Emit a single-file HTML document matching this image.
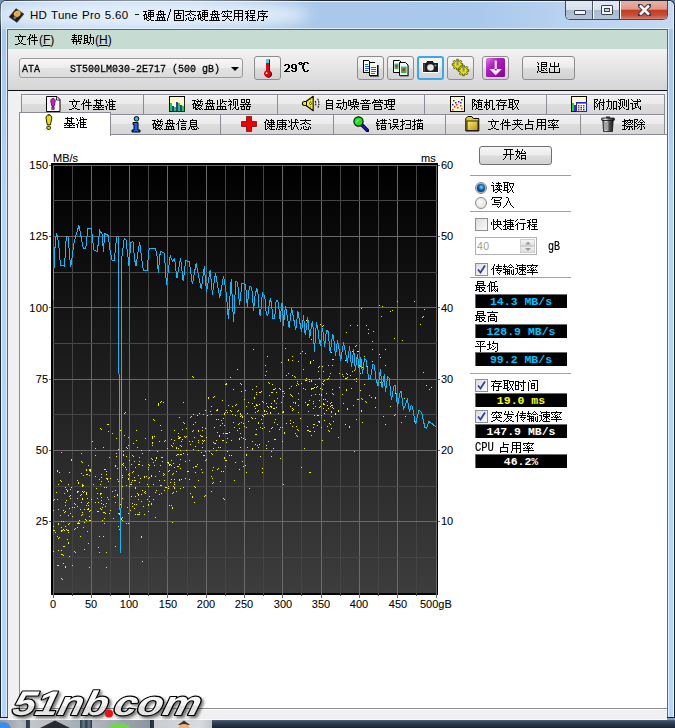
<!DOCTYPE html>
<html><head><meta charset="utf-8">
<style>
*{margin:0;padding:0;box-sizing:border-box}
html,body{width:675px;height:728px;overflow:hidden;background:#6a8aa8}
body{position:relative;font-family:"Liberation Sans",sans-serif;font-size:12px;color:#000}
.a{position:absolute}
#frame{left:0;top:0;width:675px;height:722px;background:linear-gradient(180deg,#b4d0ee 0px,#a9c8ea 14px,#a6c6ea 28px,#b2d4f8 200px,#b4d6fa 720px);border:1px solid #1c2430;border-bottom:none;border-radius:6px 6px 0 0}
#frame:before{content:"";position:absolute;left:0;top:0;right:0;bottom:0;border:1px solid rgba(255,255,255,.75);border-bottom:none;border-radius:5px 5px 0 0}
#title{left:30px;top:9px;font-size:11.5px;white-space:nowrap;color:#000;letter-spacing:0.3px;word-spacing:0.5px}
#client{left:7px;top:29px;width:661px;height:700px;background:#f0f0f0;border:1px solid #59636e;border-bottom:none}
#menubar{left:8px;top:30px;width:659px;height:19px;background:#c6dcd3}
.menu{top:33px;font-size:12px;white-space:nowrap}
#toolbar{left:8px;top:49px;width:659px;height:41px;background:linear-gradient(180deg,#f3f3f3,#d5d5d5)}
#tbline{left:8px;top:90px;width:659px;height:1px;background:#101010}
.btn{border:1px solid #8c8c8c;border-radius:3px;background:linear-gradient(180deg,#f6f6f6 0,#ececec 45%,#dcdcdc 55%,#d2d2d2 100%)}
.tab{border:1px solid #898c95;background:linear-gradient(180deg,#fafafa 0,#efefef 8%,#ebebeb 45%,#dddddd 50%,#d6d6d6 100%);font-size:12px;white-space:nowrap}
#page{left:19px;top:134px;width:649px;height:575px;background:#fff;border:1px solid #898c95}
.lbl{font-size:11px;white-space:nowrap;color:#000;-webkit-text-stroke:0.08px #000}
.sep{left:470px;width:101px;height:1px;background:#a0a0a0}
.box{left:475px;width:92px;height:14px;background:#000;border-top:1px solid #6a6a6a;border-left:1px solid #6a6a6a;font-family:"Liberation Mono",monospace;font-weight:bold;font-size:11.5px;line-height:14px;text-align:center;white-space:pre;text-indent:-1px}
.cb{left:475px;width:13px;height:13px;border:1px solid #8e8f8f;background:linear-gradient(135deg,#dcdcdc,#fbfbfb)}
.txt{font-size:12px;white-space:nowrap}
#taskbar{left:0;top:720px;width:675px;height:8px;background:linear-gradient(180deg,#50647a 0,#34465a 25%,#263444 60%,#1a2430 100%)}
</style></head><body>
<div id="frame" class="a"></div>
<div class="a" style="left:2px;top:2px;width:671px;height:27px;border-radius:4px 4px 0 0;background:linear-gradient(90deg,#bcd4ee 0,#aac8ea 300px,#a8c8ec 470px,#b8d2ef 560px,#c4daf2 675px)"></div>
<div class="a" style="left:-10px;top:-1px;width:320px;height:31px;border-radius:50%;background:rgba(232,242,252,.9);filter:blur(7px)"></div>
<div id="title" class="a">HD Tune Pro 5.60</div>
<div class="a" style="left:135px;top:14px;width:4px;height:1px;background:#1a1a1a"></div>
<!-- caption buttons -->
<div class="a" style="left:565px;top:1px;width:103px;height:19px;border:1px solid #404a58;border-top:none;border-radius:0 0 5px 5px;overflow:hidden;background:#fff">
 <div class="a" style="left:0;top:0;width:27px;height:18px;background:linear-gradient(180deg,#e2eaf4 0,#d6e0ec 50%,#a9bad0 52%,#b4c4d8 100%);border-right:1px solid #4a5462"></div>
 <div class="a" style="left:28px;top:0;width:26px;height:18px;background:linear-gradient(180deg,#e2eaf4 0,#d6e0ec 50%,#a9bad0 52%,#b4c4d8 100%);border-right:1px solid #5a2020"></div>
 <div class="a" style="left:55px;top:0;width:47px;height:18px;background:linear-gradient(180deg,#eab0a4 0,#de9a8a 45%,#c43c22 52%,#c85038 80%,#d88070 100%)"></div>
 <div class="a" style="left:8px;top:9px;width:12px;height:5px;background:#f4f4f4;border:1px solid #3a4250;border-radius:1px"></div>
 <div class="a" style="left:35px;top:4px;width:12px;height:10px;background:#f4f4f4;border:1px solid #3a4250;border-radius:1px"><div class="a" style="left:2px;top:2px;width:6px;height:4px;background:#c4d6e6;border:1px solid #3a4250"></div></div>
 <svg class="a" style="left:72px;top:3px" width="13" height="12" viewBox="0 0 13 12"><path d="M2 1.5L11 10.5M11 1.5L2 10.5" stroke="#3a3a48" stroke-width="4.6" stroke-linecap="square"/><path d="M2 1.5L11 10.5M11 1.5L2 10.5" stroke="#f6f6f6" stroke-width="2.6"/></svg>
</div>
<div class="a" style="left:6px;top:28px;width:663px;height:700px;border:1px solid rgba(235,245,255,.8);border-bottom:none"></div>
<div id="client" class="a"></div>
<div id="menubar" class="a"></div>
<div class="a menu" style="left:39px">(<u>F</u>)</div>
<div class="a menu" style="left:95px">(<u>H</u>)</div>
<div id="toolbar" class="a"></div>
<div id="tbline" class="a"></div>
<!-- combobox -->
<div class="a" style="left:19px;top:58px;width:224px;height:20px;border:1px solid #9a9a9a;border-radius:3px;background:linear-gradient(180deg,#f8f8f8,#ececec 50%,#e2e2e2 51%,#dcdcdc)"></div>
<div class="a" style="left:22px;top:63px;font-family:'Liberation Mono',monospace;font-size:10px;white-space:pre;transform:scaleY(1.15);transform-origin:0 0;-webkit-text-stroke:0.25px #000">ATA     ST500LM030-2E717 (500 gB)</div>
<div class="a" style="left:231px;top:67px;width:0;height:0;border-left:4px solid transparent;border-right:4px solid transparent;border-top:4px solid #000"></div>
<!-- temp button -->
<div class="a btn" style="left:254px;top:56px;width:27px;height:24px"></div>

<!-- toolbar buttons -->
<div class="a btn" style="left:357px;top:56px;width:27px;height:24px"></div>
<div class="a btn" style="left:387px;top:56px;width:27px;height:24px"></div>
<div class="a btn" style="left:417px;top:56px;width:27px;height:24px;border:2px solid #3aa8ec;background:linear-gradient(180deg,#f8f8f8 0,#ededed 45%,#dcdcdc 55%,#d4d4d4 100%)"></div>
<div class="a btn" style="left:447px;top:56px;width:27px;height:24px"></div>
<div class="a btn" style="left:482px;top:56px;width:27px;height:24px"></div>
<div class="a btn" style="left:522px;top:56px;width:53px;height:24px"></div>
<!-- tabs row 1 -->
<div class="a tab" style="left:21px;top:94px;width:123px;height:21px"></div>
<div class="a tab" style="left:143px;top:94px;width:135px;height:21px"></div>
<div class="a tab" style="left:277px;top:94px;width:148px;height:21px"></div>
<div class="a tab" style="left:424px;top:94px;width:123px;height:21px"></div>
<div class="a tab" style="left:546px;top:94px;width:119px;height:21px"></div>
<!-- page -->
<div id="page" class="a"></div>
<div class="a" style="left:8px;top:709px;width:659px;height:1px;background:#fff"></div>
<div class="a" style="left:8px;top:719px;width:659px;height:1px;background:#fafafa"></div>
<div class="a" style="left:667px;top:29px;width:1px;height:689px;background:#5a6878"></div>
<div class="a" style="left:667px;top:717px;width:8px;height:1px;background:#1c2430"></div>
<div class="a" style="left:667px;top:718px;width:8px;height:2px;background:#8a9aae"></div>
<div class="a" style="left:0;top:717px;width:8px;height:1px;background:#141c26"></div>
<div class="a" style="left:0;top:718px;width:8px;height:2px;background:#dfe3e8"></div>
<!-- tabs row 2 -->
<div class="a tab" style="left:110px;top:114px;width:111px;height:21px"></div>
<div class="a tab" style="left:220px;top:114px;width:114px;height:21px"></div>
<div class="a tab" style="left:333px;top:114px;width:113px;height:21px"></div>
<div class="a tab" style="left:445px;top:114px;width:136px;height:21px"></div>
<div class="a tab" style="left:580px;top:114px;width:85px;height:21px"></div>
<div class="a" style="left:19px;top:112px;width:92px;height:24px;background:#fff;border:1px solid #898c95;border-bottom:none"></div>
<!-- tab labels -->
<svg width="675" height="728" style="position:absolute;left:0;top:0" shape-rendering="crispEdges">
<defs><linearGradient id="cg" x1="0" y1="0" x2="0" y2="1"><stop offset="0" stop-color="#000"/><stop offset="1" stop-color="#3d3d3d"/></linearGradient></defs>
<rect x="51" y="163" width="387" height="432" fill="#000"/>
<rect x="53" y="165" width="383" height="428" fill="url(#cg)"/>
<rect x="53" y="165" width="1" height="433" fill="#6a6a6a"/>
<rect x="72" y="165" width="1" height="431" fill="#444444"/>
<rect x="91" y="165" width="1" height="433" fill="#6a6a6a"/>
<rect x="110" y="165" width="1" height="431" fill="#444444"/>
<rect x="129" y="165" width="1" height="433" fill="#6a6a6a"/>
<rect x="148" y="165" width="1" height="431" fill="#444444"/>
<rect x="167" y="165" width="1" height="433" fill="#6a6a6a"/>
<rect x="187" y="165" width="1" height="431" fill="#444444"/>
<rect x="206" y="165" width="1" height="433" fill="#6a6a6a"/>
<rect x="225" y="165" width="1" height="431" fill="#444444"/>
<rect x="244" y="165" width="1" height="433" fill="#6a6a6a"/>
<rect x="263" y="165" width="1" height="431" fill="#444444"/>
<rect x="282" y="165" width="1" height="433" fill="#6a6a6a"/>
<rect x="301" y="165" width="1" height="431" fill="#444444"/>
<rect x="321" y="165" width="1" height="433" fill="#6a6a6a"/>
<rect x="340" y="165" width="1" height="431" fill="#444444"/>
<rect x="359" y="165" width="1" height="433" fill="#6a6a6a"/>
<rect x="378" y="165" width="1" height="431" fill="#444444"/>
<rect x="397" y="165" width="1" height="433" fill="#6a6a6a"/>
<rect x="416" y="165" width="1" height="431" fill="#444444"/>
<rect x="436" y="165" width="1" height="433" fill="#6a6a6a"/>
<rect x="53" y="165" width="384" height="1" fill="#6a6a6a"/>
<rect x="53" y="200" width="384" height="1" fill="#464646"/>
<rect x="53" y="236" width="384" height="1" fill="#6a6a6a"/>
<rect x="53" y="272" width="384" height="1" fill="#464646"/>
<rect x="53" y="307" width="384" height="1" fill="#6a6a6a"/>
<rect x="53" y="343" width="384" height="1" fill="#464646"/>
<rect x="53" y="379" width="384" height="1" fill="#6a6a6a"/>
<rect x="53" y="414" width="384" height="1" fill="#464646"/>
<rect x="53" y="450" width="384" height="1" fill="#6a6a6a"/>
<rect x="53" y="486" width="384" height="1" fill="#464646"/>
<rect x="53" y="521" width="384" height="1" fill="#6a6a6a"/>
<rect x="53" y="557" width="384" height="1" fill="#464646"/>
<rect x="49" y="165" width="2" height="1" fill="#6a6a6a"/><rect x="438" y="165" width="2" height="1" fill="#6a6a6a"/>
<rect x="49" y="236" width="2" height="1" fill="#6a6a6a"/><rect x="438" y="236" width="2" height="1" fill="#6a6a6a"/>
<rect x="49" y="307" width="2" height="1" fill="#6a6a6a"/><rect x="438" y="307" width="2" height="1" fill="#6a6a6a"/>
<rect x="49" y="379" width="2" height="1" fill="#6a6a6a"/><rect x="438" y="379" width="2" height="1" fill="#6a6a6a"/>
<rect x="49" y="450" width="2" height="1" fill="#6a6a6a"/><rect x="438" y="450" width="2" height="1" fill="#6a6a6a"/>
<rect x="49" y="521" width="2" height="1" fill="#6a6a6a"/><rect x="438" y="521" width="2" height="1" fill="#6a6a6a"/>
<path d="M53 500h1v1h-1zM53 510h1v1h-1zM53 526h1v1h-1zM53 530h1v1h-1zM53 551h1v1h-1zM54 499h1v1h-1zM54 530h1v1h-1zM55 532h1v1h-1zM56 492h1v1h-1zM57 470h1v1h-1zM57 471h1v1h-1zM57 499h1v1h-1zM57 536h1v1h-1zM57 565h1v1h-1zM58 484h1v1h-1zM58 509h1v1h-1zM58 523h1v1h-1zM58 524h1v1h-1zM58 538h1v1h-1zM58 550h1v1h-1zM58 565h1v1h-1zM59 472h1v1h-1zM59 537h1v1h-1zM60 480h1v1h-1zM60 515h1v1h-1zM61 452h1v1h-1zM61 481h1v1h-1zM61 521h1v1h-1zM61 527h1v1h-1zM61 530h1v1h-1zM61 531h1v1h-1zM61 550h1v1h-1zM61 554h1v1h-1zM61 578h1v1h-1zM62 530h1v1h-1zM62 554h1v1h-1zM62 579h1v1h-1zM63 510h1v1h-1zM63 521h1v1h-1zM63 529h1v1h-1zM63 546h1v1h-1zM63 555h1v1h-1zM63 563h1v1h-1zM64 493h1v1h-1zM64 512h1v1h-1zM64 530h1v1h-1zM64 546h1v1h-1zM65 487h1v1h-1zM65 502h1v1h-1zM65 505h1v1h-1zM65 511h1v1h-1zM65 526h1v1h-1zM65 566h1v1h-1zM65 567h1v1h-1zM66 489h1v1h-1zM66 500h1v1h-1zM66 529h1v1h-1zM67 490h1v1h-1zM67 491h1v1h-1zM67 530h1v1h-1zM67 539h1v1h-1zM68 484h1v1h-1zM68 515h1v1h-1zM68 524h1v1h-1zM68 530h1v1h-1zM68 532h1v1h-1zM68 542h1v1h-1zM68 543h1v1h-1zM69 472h1v1h-1zM69 496h1v1h-1zM69 508h1v1h-1zM69 523h1v1h-1zM69 556h1v1h-1zM70 489h1v1h-1zM70 495h1v1h-1zM70 498h1v1h-1zM70 513h1v1h-1zM71 459h1v1h-1zM71 460h1v1h-1zM71 487h1v1h-1zM72 507h1v1h-1zM72 516h1v1h-1zM72 565h1v1h-1zM74 503h1v1h-1zM74 507h1v1h-1zM74 529h1v1h-1zM74 551h1v1h-1zM75 504h1v1h-1zM75 528h1v1h-1zM75 552h1v1h-1zM77 480h1v1h-1zM77 491h1v1h-1zM77 492h1v1h-1zM77 498h1v1h-1zM77 506h1v1h-1zM77 523h1v1h-1zM77 527h1v1h-1zM78 482h1v1h-1zM78 483h1v1h-1zM78 491h1v1h-1zM78 522h1v1h-1zM78 523h1v1h-1zM79 520h1v1h-1zM79 523h1v1h-1zM80 495h1v1h-1zM80 509h1v1h-1zM80 536h1v1h-1zM81 453h1v1h-1zM81 461h1v1h-1zM81 473h1v1h-1zM81 494h1v1h-1zM81 502h1v1h-1zM81 515h1v1h-1zM82 462h1v1h-1zM82 484h1v1h-1zM82 485h1v1h-1zM82 486h1v1h-1zM82 491h1v1h-1zM82 498h1v1h-1zM82 499h1v1h-1zM82 512h1v1h-1zM82 514h1v1h-1zM83 475h1v1h-1zM83 485h1v1h-1zM83 492h1v1h-1zM83 527h1v1h-1zM84 491h1v1h-1zM84 509h1v1h-1zM84 522h1v1h-1zM84 549h1v1h-1zM85 519h1v1h-1zM86 469h1v1h-1zM86 470h1v1h-1zM86 474h1v1h-1zM86 492h1v1h-1zM86 493h1v1h-1zM86 494h1v1h-1zM86 505h1v1h-1zM86 520h1v1h-1zM87 474h1v1h-1zM87 498h1v1h-1zM87 503h1v1h-1zM87 509h1v1h-1zM87 531h1v1h-1zM88 465h1v1h-1zM88 502h1v1h-1zM88 505h1v1h-1zM88 508h1v1h-1zM88 509h1v1h-1zM88 543h1v1h-1zM89 469h1v1h-1zM89 470h1v1h-1zM89 475h1v1h-1zM89 511h1v1h-1zM89 516h1v1h-1zM89 520h1v1h-1zM89 567h1v1h-1zM90 469h1v1h-1zM90 470h1v1h-1zM90 471h1v1h-1zM90 510h1v1h-1zM90 520h1v1h-1zM91 499h1v1h-1zM92 441h1v1h-1zM93 484h1v1h-1zM95 448h1v1h-1zM95 455h1v1h-1zM95 476h1v1h-1zM95 502h1v1h-1zM96 488h1v1h-1zM97 493h1v1h-1zM97 498h1v1h-1zM97 511h1v1h-1zM98 502h1v1h-1zM98 511h1v1h-1zM98 547h1v1h-1zM99 479h1v1h-1zM99 536h1v1h-1zM99 552h1v1h-1zM100 428h1v1h-1zM100 484h1v1h-1zM100 493h1v1h-1zM100 494h1v1h-1zM100 508h1v1h-1zM101 429h1v1h-1zM101 474h1v1h-1zM101 477h1v1h-1zM101 481h1v1h-1zM101 493h1v1h-1zM101 497h1v1h-1zM101 500h1v1h-1zM101 503h1v1h-1zM101 509h1v1h-1zM102 507h1v1h-1zM102 520h1v1h-1zM103 447h1v1h-1zM103 504h1v1h-1zM103 512h1v1h-1zM103 536h1v1h-1zM104 469h1v1h-1zM104 487h1v1h-1zM104 512h1v1h-1zM104 518h1v1h-1zM104 523h1v1h-1zM105 469h1v1h-1zM105 506h1v1h-1zM105 513h1v1h-1zM106 471h1v1h-1zM106 474h1v1h-1zM106 478h1v1h-1zM106 487h1v1h-1zM106 503h1v1h-1zM106 552h1v1h-1zM106 567h1v1h-1zM107 424h1v1h-1zM107 478h1v1h-1zM107 479h1v1h-1zM107 497h1v1h-1zM108 424h1v1h-1zM108 431h1v1h-1zM108 481h1v1h-1zM108 499h1v1h-1zM109 457h1v1h-1zM109 513h1v1h-1zM110 478h1v1h-1zM110 510h1v1h-1zM112 433h1v1h-1zM112 491h1v1h-1zM113 518h1v1h-1zM114 496h1v1h-1zM115 465h1v1h-1zM115 466h1v1h-1zM115 490h1v1h-1zM115 502h1v1h-1zM115 546h1v1h-1zM116 438h1v1h-1zM116 453h1v1h-1zM116 456h1v1h-1zM117 468h1v1h-1zM117 479h1v1h-1zM117 494h1v1h-1zM117 495h1v1h-1zM118 449h1v1h-1zM118 481h1v1h-1zM118 513h1v1h-1zM118 526h1v1h-1zM119 499h1v1h-1zM119 502h1v1h-1zM119 513h1v1h-1zM119 514h1v1h-1zM119 529h1v1h-1zM120 430h1v1h-1zM120 504h1v1h-1zM121 430h1v1h-1zM121 466h1v1h-1zM121 480h1v1h-1zM121 484h1v1h-1zM121 488h1v1h-1zM121 503h1v1h-1zM121 518h1v1h-1zM121 519h1v1h-1zM122 464h1v1h-1zM122 475h1v1h-1zM122 477h1v1h-1zM122 486h1v1h-1zM122 498h1v1h-1zM122 517h1v1h-1zM122 520h1v1h-1zM123 451h1v1h-1zM123 454h1v1h-1zM123 455h1v1h-1zM123 463h1v1h-1zM123 465h1v1h-1zM124 413h1v1h-1zM124 435h1v1h-1zM125 412h1v1h-1zM125 467h1v1h-1zM126 447h1v1h-1zM126 456h1v1h-1zM126 469h1v1h-1zM126 485h1v1h-1zM126 523h1v1h-1zM127 448h1v1h-1zM127 507h1v1h-1zM128 437h1v1h-1zM128 445h1v1h-1zM128 474h1v1h-1zM128 478h1v1h-1zM128 479h1v1h-1zM128 513h1v1h-1zM128 523h1v1h-1zM129 460h1v1h-1zM129 473h1v1h-1zM129 475h1v1h-1zM129 486h1v1h-1zM130 484h1v1h-1zM130 510h1v1h-1zM131 464h1v1h-1zM131 482h1v1h-1zM131 484h1v1h-1zM131 496h1v1h-1zM132 455h1v1h-1zM132 472h1v1h-1zM132 480h1v1h-1zM132 503h1v1h-1zM132 506h1v1h-1zM133 443h1v1h-1zM133 456h1v1h-1zM133 471h1v1h-1zM134 461h1v1h-1zM134 477h1v1h-1zM134 480h1v1h-1zM134 504h1v1h-1zM134 508h1v1h-1zM135 467h1v1h-1zM135 480h1v1h-1zM135 487h1v1h-1zM135 488h1v1h-1zM135 496h1v1h-1zM135 514h1v1h-1zM136 430h1v1h-1zM136 440h1v1h-1zM136 504h1v1h-1zM137 447h1v1h-1zM137 493h1v1h-1zM137 514h1v1h-1zM138 464h1v1h-1zM138 475h1v1h-1zM138 494h1v1h-1zM138 495h1v1h-1zM138 499h1v1h-1zM138 514h1v1h-1zM139 457h1v1h-1zM139 461h1v1h-1zM139 464h1v1h-1zM139 482h1v1h-1zM139 512h1v1h-1zM139 514h1v1h-1zM140 478h1v1h-1zM141 450h1v1h-1zM141 494h1v1h-1zM141 501h1v1h-1zM141 536h1v1h-1zM141 537h1v1h-1zM142 453h1v1h-1zM142 465h1v1h-1zM142 490h1v1h-1zM142 561h1v1h-1zM143 506h1v1h-1zM144 476h1v1h-1zM144 477h1v1h-1zM144 492h1v1h-1zM144 514h1v1h-1zM145 399h1v1h-1zM145 438h1v1h-1zM145 491h1v1h-1zM145 493h1v1h-1zM146 476h1v1h-1zM147 484h1v1h-1zM147 499h1v1h-1zM148 464h1v1h-1zM148 467h1v1h-1zM148 469h1v1h-1zM148 478h1v1h-1zM148 486h1v1h-1zM148 504h1v1h-1zM148 505h1v1h-1zM148 511h1v1h-1zM149 450h1v1h-1zM149 465h1v1h-1zM149 477h1v1h-1zM149 496h1v1h-1zM149 501h1v1h-1zM151 458h1v1h-1zM151 475h1v1h-1zM151 476h1v1h-1zM151 503h1v1h-1zM151 504h1v1h-1zM152 436h1v1h-1zM152 437h1v1h-1zM152 438h1v1h-1zM152 442h1v1h-1zM152 443h1v1h-1zM152 445h1v1h-1zM152 459h1v1h-1zM153 419h1v1h-1zM153 462h1v1h-1zM153 484h1v1h-1zM153 499h1v1h-1zM154 420h1v1h-1zM154 436h1v1h-1zM154 465h1v1h-1zM155 460h1v1h-1zM155 476h1v1h-1zM155 492h1v1h-1zM155 517h1v1h-1zM156 457h1v1h-1zM156 458h1v1h-1zM156 490h1v1h-1zM157 451h1v1h-1zM158 403h1v1h-1zM158 404h1v1h-1zM158 405h1v1h-1zM159 441h1v1h-1zM159 471h1v1h-1zM159 480h1v1h-1zM159 494h1v1h-1zM160 402h1v1h-1zM160 425h1v1h-1zM160 465h1v1h-1zM160 485h1v1h-1zM161 401h1v1h-1zM161 430h1v1h-1zM161 457h1v1h-1zM161 485h1v1h-1zM161 493h1v1h-1zM162 457h1v1h-1zM162 461h1v1h-1zM163 402h1v1h-1zM163 473h1v1h-1zM163 475h1v1h-1zM164 441h1v1h-1zM164 474h1v1h-1zM164 480h1v1h-1zM164 490h1v1h-1zM165 440h1v1h-1zM165 487h1v1h-1zM166 487h1v1h-1zM167 448h1v1h-1zM167 462h1v1h-1zM168 462h1v1h-1zM168 463h1v1h-1zM168 471h1v1h-1zM168 486h1v1h-1zM168 488h1v1h-1zM169 464h1v1h-1zM169 465h1v1h-1zM169 470h1v1h-1zM169 505h1v1h-1zM170 464h1v1h-1zM170 482h1v1h-1zM171 439h1v1h-1zM171 445h1v1h-1zM171 460h1v1h-1zM171 465h1v1h-1zM171 479h1v1h-1zM171 505h1v1h-1zM172 446h1v1h-1zM172 474h1v1h-1zM172 493h1v1h-1zM172 507h1v1h-1zM172 508h1v1h-1zM172 522h1v1h-1zM173 443h1v1h-1zM173 463h1v1h-1zM173 473h1v1h-1zM173 486h1v1h-1zM173 492h1v1h-1zM174 430h1v1h-1zM174 440h1v1h-1zM174 467h1v1h-1zM174 479h1v1h-1zM174 482h1v1h-1zM174 484h1v1h-1zM174 487h1v1h-1zM174 488h1v1h-1zM176 447h1v1h-1zM176 448h1v1h-1zM176 455h1v1h-1zM176 471h1v1h-1zM176 491h1v1h-1zM177 454h1v1h-1zM177 466h1v1h-1zM178 433h1v1h-1zM178 436h1v1h-1zM178 438h1v1h-1zM178 448h1v1h-1zM178 454h1v1h-1zM178 466h1v1h-1zM179 417h1v1h-1zM179 437h1v1h-1zM179 438h1v1h-1zM179 464h1v1h-1zM179 479h1v1h-1zM179 480h1v1h-1zM180 437h1v1h-1zM180 445h1v1h-1zM180 450h1v1h-1zM180 454h1v1h-1zM180 459h1v1h-1zM180 468h1v1h-1zM180 488h1v1h-1zM181 441h1v1h-1zM181 446h1v1h-1zM181 454h1v1h-1zM181 479h1v1h-1zM182 429h1v1h-1zM182 439h1v1h-1zM183 402h1v1h-1zM183 422h1v1h-1zM183 453h1v1h-1zM183 487h1v1h-1zM184 423h1v1h-1zM184 436h1v1h-1zM185 437h1v1h-1zM185 461h1v1h-1zM185 478h1v1h-1zM186 428h1v1h-1zM186 436h1v1h-1zM186 450h1v1h-1zM187 454h1v1h-1zM187 471h1v1h-1zM188 471h1v1h-1zM189 441h1v1h-1zM189 460h1v1h-1zM189 479h1v1h-1zM190 417h1v1h-1zM190 444h1v1h-1zM190 493h1v1h-1zM191 416h1v1h-1zM192 376h1v1h-1zM192 431h1v1h-1zM192 441h1v1h-1zM192 496h1v1h-1zM192 497h1v1h-1zM193 377h1v1h-1zM193 414h1v1h-1zM193 424h1v1h-1zM193 430h1v1h-1zM193 449h1v1h-1zM193 467h1v1h-1zM194 437h1v1h-1zM194 486h1v1h-1zM194 502h1v1h-1zM195 422h1v1h-1zM195 446h1v1h-1zM195 466h1v1h-1zM195 472h1v1h-1zM195 487h1v1h-1zM196 466h1v1h-1zM197 415h1v1h-1zM197 464h1v1h-1zM198 430h1v1h-1zM198 431h1v1h-1zM198 440h1v1h-1zM198 442h1v1h-1zM198 450h1v1h-1zM198 480h1v1h-1zM199 413h1v1h-1zM200 435h1v1h-1zM201 436h1v1h-1zM201 452h1v1h-1zM201 469h1v1h-1zM202 427h1v1h-1zM202 430h1v1h-1zM202 436h1v1h-1zM202 440h1v1h-1zM202 443h1v1h-1zM202 447h1v1h-1zM202 472h1v1h-1zM203 414h1v1h-1zM203 441h1v1h-1zM203 455h1v1h-1zM204 440h1v1h-1zM204 455h1v1h-1zM204 496h1v1h-1zM205 410h1v1h-1zM205 428h1v1h-1zM205 451h1v1h-1zM205 460h1v1h-1zM205 495h1v1h-1zM206 437h1v1h-1zM206 459h1v1h-1zM207 415h1v1h-1zM208 397h1v1h-1zM208 398h1v1h-1zM209 451h1v1h-1zM210 411h1v1h-1zM211 406h1v1h-1zM211 414h1v1h-1zM211 453h1v1h-1zM211 476h1v1h-1zM211 491h1v1h-1zM212 454h1v1h-1zM212 470h1v1h-1zM212 478h1v1h-1zM212 483h1v1h-1zM213 397h1v1h-1zM213 442h1v1h-1zM213 448h1v1h-1zM213 467h1v1h-1zM213 482h1v1h-1zM214 396h1v1h-1zM214 427h1v1h-1zM214 443h1v1h-1zM215 443h1v1h-1zM216 410h1v1h-1zM216 419h1v1h-1zM216 440h1v1h-1zM216 450h1v1h-1zM217 409h1v1h-1zM217 410h1v1h-1zM217 432h1v1h-1zM217 469h1v1h-1zM218 419h1v1h-1zM218 447h1v1h-1zM218 468h1v1h-1zM219 435h1v1h-1zM219 436h1v1h-1zM220 425h1v1h-1zM220 447h1v1h-1zM220 481h1v1h-1zM221 420h1v1h-1zM221 471h1v1h-1zM222 400h1v1h-1zM222 423h1v1h-1zM222 440h1v1h-1zM223 418h1v1h-1zM223 433h1v1h-1zM223 440h1v1h-1zM223 471h1v1h-1zM223 498h1v1h-1zM224 413h1v1h-1zM224 414h1v1h-1zM224 425h1v1h-1zM224 457h1v1h-1zM224 458h1v1h-1zM224 499h1v1h-1zM225 384h1v1h-1zM225 412h1v1h-1zM225 433h1v1h-1zM225 460h1v1h-1zM225 466h1v1h-1zM226 383h1v1h-1zM226 384h1v1h-1zM226 410h1v1h-1zM226 433h1v1h-1zM226 442h1v1h-1zM226 460h1v1h-1zM227 412h1v1h-1zM227 433h1v1h-1zM227 438h1v1h-1zM227 451h1v1h-1zM228 405h1v1h-1zM229 432h1v1h-1zM229 455h1v1h-1zM230 377h1v1h-1zM230 410h1v1h-1zM231 411h1v1h-1zM231 440h1v1h-1zM231 455h1v1h-1zM232 406h1v1h-1zM232 414h1v1h-1zM233 389h1v1h-1zM233 422h1v1h-1zM234 427h1v1h-1zM234 480h1v1h-1zM235 405h1v1h-1zM235 415h1v1h-1zM235 462h1v1h-1zM236 404h1v1h-1zM237 369h1v1h-1zM237 411h1v1h-1zM237 430h1v1h-1zM238 410h1v1h-1zM238 424h1v1h-1zM239 423h1v1h-1zM239 428h1v1h-1zM239 438h1v1h-1zM239 439h1v1h-1zM239 469h1v1h-1zM240 383h1v1h-1zM240 413h1v1h-1zM240 414h1v1h-1zM240 416h1v1h-1zM240 433h1v1h-1zM240 447h1v1h-1zM241 384h1v1h-1zM241 391h1v1h-1zM241 415h1v1h-1zM241 422h1v1h-1zM241 437h1v1h-1zM242 416h1v1h-1zM242 417h1v1h-1zM242 461h1v1h-1zM243 423h1v1h-1zM243 438h1v1h-1zM243 466h1v1h-1zM244 399h1v1h-1zM244 426h1v1h-1zM245 390h1v1h-1zM245 439h1v1h-1zM245 465h1v1h-1zM246 406h1v1h-1zM246 427h1v1h-1zM246 454h1v1h-1zM246 455h1v1h-1zM246 472h1v1h-1zM247 413h1v1h-1zM247 447h1v1h-1zM248 402h1v1h-1zM248 421h1v1h-1zM249 488h1v1h-1zM251 417h1v1h-1zM252 389h1v1h-1zM252 403h1v1h-1zM252 418h1v1h-1zM252 441h1v1h-1zM252 448h1v1h-1zM252 449h1v1h-1zM253 349h1v1h-1zM254 397h1v1h-1zM254 398h1v1h-1zM254 406h1v1h-1zM255 408h1v1h-1zM255 412h1v1h-1zM255 418h1v1h-1zM255 434h1v1h-1zM255 444h1v1h-1zM256 386h1v1h-1zM256 392h1v1h-1zM256 394h1v1h-1zM256 404h1v1h-1zM256 405h1v1h-1zM256 429h1v1h-1zM256 434h1v1h-1zM257 405h1v1h-1zM257 411h1v1h-1zM257 445h1v1h-1zM258 410h1v1h-1zM258 422h1v1h-1zM258 423h1v1h-1zM258 447h1v1h-1zM259 392h1v1h-1zM259 404h1v1h-1zM259 444h1v1h-1zM260 392h1v1h-1zM260 427h1v1h-1zM260 456h1v1h-1zM261 391h1v1h-1zM261 419h1v1h-1zM262 401h1v1h-1zM262 415h1v1h-1zM262 423h1v1h-1zM262 428h1v1h-1zM262 468h1v1h-1zM262 472h1v1h-1zM263 402h1v1h-1zM263 416h1v1h-1zM264 410h1v1h-1zM264 411h1v1h-1zM264 414h1v1h-1zM264 427h1v1h-1zM265 365h1v1h-1zM265 375h1v1h-1zM265 414h1v1h-1zM266 371h1v1h-1zM266 403h1v1h-1zM266 411h1v1h-1zM266 445h1v1h-1zM266 448h1v1h-1zM267 356h1v1h-1zM267 406h1v1h-1zM267 413h1v1h-1zM268 382h1v1h-1zM268 407h1v1h-1zM268 441h1v1h-1zM269 383h1v1h-1zM269 395h1v1h-1zM269 431h1v1h-1zM270 406h1v1h-1zM270 412h1v1h-1zM270 413h1v1h-1zM271 392h1v1h-1zM271 403h1v1h-1zM271 406h1v1h-1zM271 407h1v1h-1zM271 428h1v1h-1zM271 451h1v1h-1zM271 456h1v1h-1zM272 384h1v1h-1zM272 392h1v1h-1zM272 427h1v1h-1zM273 389h1v1h-1zM273 408h1v1h-1zM273 448h1v1h-1zM274 389h1v1h-1zM274 400h1v1h-1zM274 401h1v1h-1zM274 408h1v1h-1zM274 422h1v1h-1zM274 439h1v1h-1zM275 388h1v1h-1zM275 419h1v1h-1zM275 439h1v1h-1zM276 392h1v1h-1zM276 403h1v1h-1zM276 407h1v1h-1zM277 398h1v1h-1zM277 424h1v1h-1zM278 413h1v1h-1zM279 388h1v1h-1zM279 429h1v1h-1zM280 389h1v1h-1zM280 427h1v1h-1zM280 458h1v1h-1zM281 362h1v1h-1zM281 402h1v1h-1zM282 391h1v1h-1zM282 412h1v1h-1zM282 427h1v1h-1zM282 441h1v1h-1zM283 391h1v1h-1zM283 396h1v1h-1zM283 411h1v1h-1zM283 412h1v1h-1zM283 484h1v1h-1zM284 393h1v1h-1zM284 432h1v1h-1zM284 433h1v1h-1zM285 348h1v1h-1zM286 375h1v1h-1zM286 423h1v1h-1zM288 359h1v1h-1zM288 360h1v1h-1zM288 373h1v1h-1zM289 388h1v1h-1zM290 394h1v1h-1zM290 406h1v1h-1zM290 420h1v1h-1zM290 423h1v1h-1zM291 386h1v1h-1zM291 395h1v1h-1zM292 356h1v1h-1zM292 360h1v1h-1zM292 375h1v1h-1zM292 396h1v1h-1zM292 408h1v1h-1zM292 410h1v1h-1zM292 426h1v1h-1zM293 402h1v1h-1zM293 409h1v1h-1zM293 422h1v1h-1zM294 376h1v1h-1zM295 377h1v1h-1zM295 402h1v1h-1zM295 403h1v1h-1zM295 433h1v1h-1zM296 385h1v1h-1zM296 426h1v1h-1zM296 435h1v1h-1zM297 381h1v1h-1zM297 383h1v1h-1zM297 429h1v1h-1zM297 436h1v1h-1zM298 361h1v1h-1zM298 384h1v1h-1zM298 393h1v1h-1zM298 399h1v1h-1zM298 405h1v1h-1zM298 412h1v1h-1zM298 430h1v1h-1zM300 353h1v1h-1zM300 418h1v1h-1zM301 383h1v1h-1zM301 467h1v1h-1zM302 351h1v1h-1zM303 369h1v1h-1zM303 388h1v1h-1zM304 448h1v1h-1zM305 353h1v1h-1zM305 380h1v1h-1zM305 389h1v1h-1zM305 402h1v1h-1zM306 320h1v1h-1zM306 378h1v1h-1zM306 380h1v1h-1zM307 318h1v1h-1zM307 404h1v1h-1zM307 405h1v1h-1zM307 426h1v1h-1zM307 430h1v1h-1zM308 404h1v1h-1zM308 411h1v1h-1zM308 430h1v1h-1zM309 379h1v1h-1zM309 381h1v1h-1zM309 400h1v1h-1zM309 431h1v1h-1zM309 472h1v1h-1zM310 361h1v1h-1zM310 362h1v1h-1zM310 363h1v1h-1zM310 431h1v1h-1zM310 472h1v1h-1zM311 339h1v1h-1zM311 380h1v1h-1zM311 381h1v1h-1zM311 388h1v1h-1zM311 389h1v1h-1zM311 395h1v1h-1zM311 435h1v1h-1zM312 388h1v1h-1zM313 360h1v1h-1zM313 388h1v1h-1zM313 401h1v1h-1zM313 403h1v1h-1zM313 408h1v1h-1zM313 424h1v1h-1zM313 427h1v1h-1zM314 387h1v1h-1zM314 415h1v1h-1zM314 424h1v1h-1zM314 431h1v1h-1zM315 384h1v1h-1zM315 394h1v1h-1zM315 406h1v1h-1zM316 387h1v1h-1zM317 386h1v1h-1zM317 415h1v1h-1zM317 425h1v1h-1zM318 367h1v1h-1zM318 371h1v1h-1zM318 415h1v1h-1zM318 421h1v1h-1zM319 366h1v1h-1zM319 378h1v1h-1zM319 394h1v1h-1zM319 400h1v1h-1zM319 407h1v1h-1zM319 421h1v1h-1zM319 422h1v1h-1zM320 324h1v1h-1zM320 388h1v1h-1zM320 406h1v1h-1zM321 394h1v1h-1zM321 395h1v1h-1zM321 415h1v1h-1zM321 427h1v1h-1zM322 326h1v1h-1zM322 366h1v1h-1zM322 383h1v1h-1zM322 389h1v1h-1zM322 440h1v1h-1zM323 325h1v1h-1zM323 371h1v1h-1zM323 381h1v1h-1zM323 384h1v1h-1zM323 399h1v1h-1zM323 403h1v1h-1zM323 404h1v1h-1zM323 408h1v1h-1zM324 380h1v1h-1zM324 404h1v1h-1zM324 413h1v1h-1zM324 420h1v1h-1zM325 399h1v1h-1zM326 393h1v1h-1zM326 410h1v1h-1zM327 379h1v1h-1zM327 401h1v1h-1zM327 405h1v1h-1zM327 426h1v1h-1zM328 365h1v1h-1zM328 378h1v1h-1zM328 408h1v1h-1zM328 430h1v1h-1zM329 376h1v1h-1zM329 423h1v1h-1zM329 431h1v1h-1zM330 373h1v1h-1zM330 403h1v1h-1zM330 406h1v1h-1zM330 424h1v1h-1zM331 352h1v1h-1zM331 402h1v1h-1zM331 405h1v1h-1zM331 411h1v1h-1zM331 412h1v1h-1zM331 416h1v1h-1zM331 428h1v1h-1zM332 359h1v1h-1zM332 365h1v1h-1zM332 389h1v1h-1zM332 393h1v1h-1zM332 405h1v1h-1zM332 407h1v1h-1zM333 359h1v1h-1zM333 394h1v1h-1zM333 408h1v1h-1zM333 421h1v1h-1zM335 413h1v1h-1zM335 414h1v1h-1zM338 410h1v1h-1zM338 411h1v1h-1zM338 437h1v1h-1zM339 373h1v1h-1zM339 387h1v1h-1zM342 374h1v1h-1zM342 394h1v1h-1zM343 376h1v1h-1zM343 403h1v1h-1zM345 360h1v1h-1zM345 378h1v1h-1zM345 424h1v1h-1zM346 332h1v1h-1zM346 373h1v1h-1zM346 378h1v1h-1zM346 389h1v1h-1zM346 390h1v1h-1zM347 374h1v1h-1zM347 377h1v1h-1zM347 408h1v1h-1zM347 409h1v1h-1zM349 426h1v1h-1zM349 427h1v1h-1zM350 325h1v1h-1zM350 375h1v1h-1zM351 388h1v1h-1zM352 351h1v1h-1zM352 371h1v1h-1zM353 351h1v1h-1zM353 405h1v1h-1zM354 370h1v1h-1zM354 379h1v1h-1zM354 451h1v1h-1zM355 346h1v1h-1zM356 345h1v1h-1zM356 362h1v1h-1zM356 378h1v1h-1zM356 381h1v1h-1zM356 419h1v1h-1zM357 325h1v1h-1zM357 351h1v1h-1zM357 355h1v1h-1zM357 399h1v1h-1zM358 351h1v1h-1zM358 399h1v1h-1zM359 365h1v1h-1zM360 366h1v1h-1zM360 373h1v1h-1zM360 390h1v1h-1zM361 308h1v1h-1zM361 398h1v1h-1zM361 410h1v1h-1zM361 411h1v1h-1zM362 367h1v1h-1zM362 399h1v1h-1zM362 422h1v1h-1zM364 356h1v1h-1zM364 384h1v1h-1zM365 401h1v1h-1zM366 325h1v1h-1zM366 402h1v1h-1zM367 366h1v1h-1zM368 329h1v1h-1zM368 333h1v1h-1zM369 395h1v1h-1zM371 397h1v1h-1zM372 341h1v1h-1zM372 349h1v1h-1zM372 361h1v1h-1zM373 331h1v1h-1zM375 397h1v1h-1zM375 398h1v1h-1zM375 407h1v1h-1zM379 305h1v1h-1zM379 354h1v1h-1zM380 357h1v1h-1zM380 382h1v1h-1zM381 316h1v1h-1zM381 383h1v1h-1zM382 306h1v1h-1zM383 416h1v1h-1zM384 375h1v1h-1zM385 349h1v1h-1zM385 365h1v1h-1zM385 424h1v1h-1zM390 311h1v1h-1zM390 406h1v1h-1zM392 310h1v1h-1zM394 338h1v1h-1zM394 415h1v1h-1zM395 393h1v1h-1zM395 414h1v1h-1zM397 301h1v1h-1zM401 422h1v1h-1zM402 340h1v1h-1zM404 398h1v1h-1zM405 416h1v1h-1zM414 301h1v1h-1zM414 421h1v1h-1zM420 324h1v1h-1zM422 317h1v1h-1zM423 316h1v1h-1zM423 372h1v1h-1zM424 309h1v1h-1zM426 385h1v1h-1zM429 389h1v1h-1zM431 387h1v1h-1z" fill="#f4f400"/>
<polyline points="53.2,299.7 53.8,281.8 54.2,257.0 55.6,240.6 56.5,233.0 57.6,236.5 59.0,247.5 60.4,265.3 64.5,266.0 66.3,236.5 68.0,236.5 70.7,267.4 74.1,242.0 78.9,225.5 83.3,248.5 85.8,248.2 87.8,228.5 91.5,229.0 93.7,250.0 97.4,251.5 99.6,230.0 102.5,235.0 103.3,252.0 104.8,233.7 108.3,235.4 110.0,250.3 112.1,260.2 114.3,260.2 116.0,242.6 117.1,236.0 118.2,237.1 119.6,474.0 120.5,552.5 121.4,474.0 122.0,256.3 124.2,238.7 125.9,239.3 128.1,258.0 129.0,265.7 130.8,242.6 133.0,241.5 134.7,260.2 136.0,266.0 139.6,241.9 143.3,270.7 147.0,270.7 149.1,248.7 155.4,248.7 156.9,254.6 158.3,273.0 160.3,251.4 164.3,253.1 166.5,285.0 170.2,255.4 172.4,261.3 174.6,258.3 176.9,278.3 180.6,258.3 183.2,281.3 185.7,260.6 189.4,262.0 192.4,284.3 196.1,263.5 201.3,289.4 204.3,266.5 206.5,291.7 210.2,270.2 212.4,294.6 215.4,273.1 219.8,297.6 223.5,276.1 226.5,294.6 228.3,319.3 231.2,279.3 233.6,322.2 235.7,281.5 237.6,282.2 239.5,305.2 242.0,283.4 245.5,284.3 246.0,289.5 247.3,307.2 248.6,291.6 250.0,285.9 251.4,287.4 252.5,294.2 253.5,311.3 254.9,296.3 256.6,289.0 257.7,289.5 258.5,302.0 259.5,314.4 260.6,315.0 261.6,299.9 262.6,293.2 264.7,295.7 266.3,314.4 267.8,316.0 269.4,303.0 270.4,298.3 271.5,304.0 273.0,319.1 274.6,318.6 276.1,300.9 277.7,300.4 279.2,310.3 280.3,322.2 281.5,303.0 282.6,303.0 283.4,326.3 285.5,305.6 289.1,327.9 291.7,308.2 295.8,330.0 297.9,311.3 301.5,332.1 303.6,315.5 305.2,335.2 307.8,317.5 309.8,337.8 311.3,326.5 312.4,321.0 313.3,329.2 314.4,352.3 315.3,338.6 316.4,322.1 317.7,327.6 318.8,337.5 320.4,346.3 322.3,328.1 323.7,336.4 324.5,347.4 326.5,330.3 328.1,331.4 330.3,353.4 332.5,334.7 333.6,336.4 335.5,356.2 337.5,339.7 340.8,360.5 343.5,342.4 347.4,362.7 349.6,346.3 351.5,367.1 353.7,349.0 355.3,369.9 357.5,354.0 359.5,372.1 360.8,356.7 362.5,373.7 364.4,358.4 366.0,359.5 368.8,379.2 370.4,378.7 372.7,364.4 374.2,365.0 376.0,379.2 378.2,386.4 380.4,369.3 382.1,388.0 384.3,374.3 385.4,392.4 387.6,377.0 389.2,378.1 391.4,399.6 394.2,385.3 395.3,385.8 397.5,406.7 400.2,391.9 401.3,391.9 403.5,409.5 407.4,399.6 409.6,412.2 411.2,405.0 412.3,406.2 415.6,424.3 418.9,410.5 421.6,412.2 424.9,427.6 426.6,428.1 428.8,421.5 431.5,423.2 435.9,427.0" fill="none" stroke="#14b8f4" stroke-width="1" shape-rendering="crispEdges"/>
</svg>
<!-- axis labels -->
<div class="a lbl" style="left:53px;top:152px">MB/s</div>
<div class="a lbl" style="left:421px;top:152px">ms</div>
<div class="a lbl" style="left:0;width:48.5px;text-align:right;top:159px;letter-spacing:0.3px">150</div>
<div class="a lbl" style="left:0;width:48.5px;text-align:right;top:230px;letter-spacing:0.3px">125</div>
<div class="a lbl" style="left:0;width:48.5px;text-align:right;top:302px;letter-spacing:0.3px">100</div>
<div class="a lbl" style="left:0;width:48.5px;text-align:right;top:373px;letter-spacing:0.3px">75</div>
<div class="a lbl" style="left:0;width:48.5px;text-align:right;top:444px;letter-spacing:0.3px">50</div>
<div class="a lbl" style="left:0;width:48.5px;text-align:right;top:515px;letter-spacing:0.3px">25</div>
<div class="a lbl" style="left:441px;top:159px">60</div>
<div class="a lbl" style="left:441px;top:230px">50</div>
<div class="a lbl" style="left:441px;top:302px">40</div>
<div class="a lbl" style="left:441px;top:373px">30</div>
<div class="a lbl" style="left:441px;top:444px">20</div>
<div class="a lbl" style="left:441px;top:515px">10</div>
<div class="a lbl" style="left:23px;width:60px;text-align:center;top:598px">0</div>
<div class="a lbl" style="left:61px;width:60px;text-align:center;top:598px">50</div>
<div class="a lbl" style="left:99px;width:60px;text-align:center;top:598px">100</div>
<div class="a lbl" style="left:138px;width:60px;text-align:center;top:598px">150</div>
<div class="a lbl" style="left:176px;width:60px;text-align:center;top:598px">200</div>
<div class="a lbl" style="left:214px;width:60px;text-align:center;top:598px">250</div>
<div class="a lbl" style="left:253px;width:60px;text-align:center;top:598px">300</div>
<div class="a lbl" style="left:291px;width:60px;text-align:center;top:598px">350</div>
<div class="a lbl" style="left:329px;width:60px;text-align:center;top:598px">400</div>
<div class="a lbl" style="left:368px;width:60px;text-align:center;top:598px">450</div>
<div class="a lbl" style="left:420px;top:598px">500gB</div>
<!-- right panel -->
<div class="a btn" style="left:479px;top:146px;width:73px;height:19px;border-color:#707070"></div>
<div class="a sep" style="top:175px"></div>
<div class="a" style="left:475px;top:182px;width:12px;height:12px;border-radius:50%;border:1px solid #8a8a8a;background:radial-gradient(circle at 50% 50%,#f4f4f4 0,#e4e4e4 100%)"></div>
<div class="a" style="left:477px;top:184px;width:8px;height:8px;border-radius:50%;background:radial-gradient(circle at 55% 40%,#9ee4ff 0,#2a9ae8 1.5px,#0e5aa8 3px,#0a3a78 4px);box-shadow:0 0 0 0.5px #3a5a80"></div>
<div class="a" style="left:475px;top:197px;width:12px;height:12px;border-radius:50%;border:1px solid #8a8a8a;background:radial-gradient(circle at 40% 40%,#fafafa,#d8d8d8)"></div>
<div class="a sep" style="top:211px"></div>
<div class="a cb" style="top:218px"></div>
<div class="a" style="left:475px;top:237px;width:62px;height:18px;border:1px solid #b0b0b0;background:#fff"></div>
<div class="a" style="left:520px;top:239px;width:15px;height:7px;background:linear-gradient(180deg,#f4f4f4,#e4e4e4);border:1px solid #d0d0d0"></div>
<div class="a" style="left:520px;top:246px;width:15px;height:7px;background:linear-gradient(180deg,#eeeeee,#dedede);border:1px solid #d0d0d0"></div>
<svg class="a" style="left:524px;top:240px" width="8" height="12"><path d="M1 4.5h6l-3-3z M1 8h6l-3 3z" fill="#9a9a9a"/></svg>
<div class="a" style="left:477px;top:240px;font-size:10.5px;color:#9a9a9a;letter-spacing:0.4px">40</div>
<div class="a" style="left:548px;top:240px;font-family:'Liberation Mono',monospace;font-size:10px;transform:scaleY(1.2);transform-origin:0 0;-webkit-text-stroke:0.2px #000">gB</div>
<div class="a cb" style="top:263px"></div>
<div class="a sep" style="top:277px"></div>
<div class="a box" style="top:294px;color:#00c0ff">14.3 MB/s</div>
<div class="a box" style="top:324px;color:#00c0ff">128.9 MB/s</div>
<div class="a box" style="top:352px;color:#00c0ff">99.2 MB/s</div>
<div class="a sep" style="top:373px"></div>
<div class="a cb" style="top:379px"></div>
<div class="a box" style="top:393px;color:#ffff00">19.0 ms</div>
<div class="a cb" style="top:410px"></div>
<div class="a box" style="top:424px;color:#fff">147.9 MB/s</div>
<div class="a box" style="top:454px;color:#fff">46.2%</div>
<!-- toolbar icons -->
<svg class="a" style="left:261px;top:58px" width="14" height="20" viewBox="0 0 14 20">
<path d="M5 1h3v11.5a3.5 3.5 0 1 1 -3 0z" fill="#000" transform="translate(1,0.5)"/>
<path d="M5 1h3v11.5a3.5 3.5 0 1 1 -3 0z" fill="#e8000c"/>
<rect x="5" y="1" width="3" height="4" fill="#40d8e8"/>
<path d="M3 13.5a2 2 0 0 1 1 -1" stroke="#60e0f0" stroke-width="1" fill="none"/>
<circle cx="5.6" cy="15.2" r="0.9" fill="#fff"/>
</svg>
<svg class="a" style="left:362px;top:59px" width="18" height="18" viewBox="0 0 18 18" shape-rendering="crispEdges">
<path d="M1 1h6v1h1v1h1v11h-8z" fill="#000"/><path d="M2 2h5v1h1v1h0v9h-6z" fill="#fff"/>
<rect x="3" y="5" width="3" height="1" fill="#1a6ae8"/><rect x="3" y="7" width="4" height="1" fill="#1a6ae8"/><rect x="3" y="9" width="4" height="1" fill="#1a6ae8"/><rect x="3" y="11" width="3" height="1" fill="#1a6ae8"/>
<path d="M7 3h6v1h1v1h1v1h1v11h-9z" fill="#000"/><path d="M8 4h5v2h2v10h-7z" fill="#f6f6f6"/><path d="M13 4h1v1h1v1h-2z" fill="#fff"/>
<rect x="9" y="8" width="5" height="1" fill="#1a6ae8"/><rect x="9" y="10" width="5" height="1" fill="#1a6ae8"/><rect x="9" y="12" width="5" height="1" fill="#1a6ae8"/><rect x="9" y="14" width="4" height="1" fill="#1a6ae8"/>
<rect x="16" y="6" width="1" height="12" fill="#666"/><rect x="8" y="17" width="9" height="1" fill="#666"/>
</svg>
<svg class="a" style="left:392px;top:59px" width="18" height="18" viewBox="0 0 18 18">
<path d="M1.5 1.5h6l2 2v10h-8z" fill="#fff" stroke="#000"/>
<rect x="2.5" y="5" width="4" height="5" fill="#20c040"/><rect x="3.5" y="6" width="2" height="2" fill="#e02020"/><rect x="2.5" y="4.5" width="4" height="1" fill="#40b0f0"/>
<path d="M7.5 3.5h6l2.5 2.5v10.5h-8.5z" fill="#f4f4f4" stroke="#000"/>
<rect x="9" y="8" width="5.5" height="6" fill="#20c040"/><rect x="10.5" y="9.5" width="2.5" height="2.5" fill="#e02020"/><rect x="9" y="7.5" width="5.5" height="1.2" fill="#40b0f0"/>
<path d="M16.5 6.5v10.5h-8.5" stroke="#555" fill="none"/>
</svg>
<svg class="a" style="left:421px;top:59px" width="19" height="15" viewBox="0 0 19 15">
<path d="M6 1.5h6l1 2h4.5v10h-16v-10h3.5z" fill="#1e1e1e" stroke="#fff" stroke-width="1"/>
<rect x="2.5" y="4.5" width="1.5" height="8" fill="#4a4a4a"/>
<circle cx="9.5" cy="8.5" r="3.3" fill="#e6e6e6"/>
<circle cx="14.5" cy="6.5" r="1.1" fill="#10d040"/>
</svg>
<svg class="a" style="left:451px;top:58px" width="20" height="20" viewBox="0 0 20 20">
<g fill="#e4e400" stroke="#505000" stroke-width=".9" stroke-linejoin="round"><path d="M11.7 5.6 L11.7 7.4 L10.2 7.3 L9.7 8.6 L10.9 9.5 L9.5 10.9 L8.6 9.7 L7.3 10.2 L7.4 11.7 L5.6 11.7 L5.7 10.2 L4.4 9.7 L3.5 10.9 L2.1 9.5 L3.3 8.6 L2.8 7.3 L1.3 7.4 L1.3 5.6 L2.8 5.7 L3.3 4.4 L2.1 3.5 L3.5 2.1 L4.4 3.3 L5.7 2.8 L5.6 1.3 L7.4 1.3 L7.3 2.8 L8.6 3.3 L9.5 2.1 L10.9 3.5 L9.7 4.4 L10.2 5.7Z"/><path d="M17.7 11.6 L17.7 13.4 L16.2 13.3 L15.7 14.6 L16.9 15.5 L15.5 16.9 L14.6 15.7 L13.3 16.2 L13.4 17.7 L11.6 17.7 L11.7 16.2 L10.4 15.7 L9.5 16.9 L8.1 15.5 L9.3 14.6 L8.8 13.3 L7.3 13.4 L7.3 11.6 L8.8 11.7 L9.3 10.4 L8.1 9.5 L9.5 8.1 L10.4 9.3 L11.7 8.8 L11.6 7.3 L13.4 7.3 L13.3 8.8 L14.6 9.3 L15.5 8.1 L16.9 9.5 L15.7 10.4 L16.2 11.7Z"/></g>
<path d="M6.5 1.5v6M12.5 7.5v6" stroke="#777" stroke-width="1.8"/><path d="M6 1.5v6M12 7.5v6" stroke="#bbb" stroke-width=".6"/>
</svg>
<svg class="a" style="left:486px;top:58px" width="19" height="19" viewBox="0 0 19 19">
<defs><linearGradient id="pg" x1="0" y1="0" x2="1" y2="1"><stop offset="0" stop-color="#e080e8"/><stop offset=".35" stop-color="#b020c0"/><stop offset="1" stop-color="#8a0098"/></linearGradient></defs>
<rect x="0" y="0" width="19" height="19" rx="1.5" fill="url(#pg)"/>
<path d="M8.7 2.5h2v10h-2z M3.5 11l6.2 6.2 6.2-6.2z" fill="#fff"/>
</svg>
<!-- tab icons -->
<svg class="a" style="left:46px;top:96px" width="15" height="16" viewBox="0 0 15 16">
<path d="M.5 .5h10.5l3 3v12h-13.5z" fill="#f8f8f8" stroke="#000"/>
<path d="M10.5 .5v3.5h3.5" fill="none" stroke="#000" stroke-width=".8"/>
<path d="M7 2.5c2 0 2.3 1.5 2.2 3l-1.2 5h-2l-1.2-5c-.1-1.5.2-3 2.2-3z" fill="#e010e0" stroke="#400040" stroke-width=".8"/>
<rect x="5.8" y="11.5" width="2.4" height="2" fill="#e010e0" stroke="#400040" stroke-width=".6"/>
</svg>
<svg class="a" style="left:169px;top:96px" width="16" height="16" viewBox="0 0 16 16">
<rect x=".5" y=".5" width="15" height="15" fill="#fffcc8" stroke="#000"/>
<path d="M1 7h2v8h-2zM5 11h2v4h-2zM9 7h2v8h-2zM13 10h2v5h-2z" fill="#10e010"/>
<path d="M3 10h2v5h-2zM7 6h2v9h-2zM11 9h2v6h-2z" fill="#3030e0"/>
<path d="M16 2v14h-14" stroke="#444" fill="none"/>
</svg>
<svg class="a" style="left:300px;top:94px" width="22" height="20" viewBox="0 0 22 20">
<path d="M6 7.5L13.2 2.3V16.7L6 11.5H4.2A1.8 2 0 0 1 4.2 7.5z" fill="#f0f000" stroke="#000" stroke-width="1.1" stroke-linejoin="round"/>
<path d="M6.5 7.5v4" stroke="#000" stroke-width="1"/>
<path d="M10.5 4.5v10" stroke="#707000" stroke-width=".7" stroke-dasharray="1.5 1"/>
<circle cx="10.5" cy="9.5" r="1" fill="#fff" stroke="#000" stroke-width=".6"/>
<path d="M15.2 7q1.3 2.5 0 5" fill="none" stroke="#000" stroke-width="1.1" stroke-dasharray="1.6 .9"/>
<path d="M17.6 4.8q2.6 4.7 0 9.4" fill="none" stroke="#000" stroke-width="1.1" stroke-dasharray="1.6 .9"/>
</svg>
<svg class="a" style="left:450px;top:96px" width="15" height="16" viewBox="0 0 15 16">
<rect x=".5" y=".5" width="14" height="15" fill="#fffcc8" stroke="#000"/>
<g fill="#ff2020"><rect x="2" y="13" width="1.5" height="1.5"/><rect x="4" y="10" width="1.5" height="1.5"/><rect x="7" y="11" width="1.5" height="1.5"/><rect x="10" y="9" width="1.5" height="1.5"/><rect x="6" y="8" width="1.5" height="1.5"/><rect x="11" y="12" width="1.5" height="1.5"/></g>
<g fill="#2020ff"><rect x="2" y="8" width="1.5" height="1.5"/><rect x="5" y="6" width="1.5" height="1.5"/><rect x="8" y="5" width="1.5" height="1.5"/><rect x="11" y="3" width="1.5" height="1.5"/><rect x="10" y="6" width="1.5" height="1.5"/><rect x="3" y="4" width="1.5" height="1.5"/></g>
</svg>
<svg class="a" style="left:571px;top:96px" width="16" height="16" viewBox="0 0 16 16">
<rect x=".5" y=".5" width="15" height="15" fill="#fffcc8" stroke="#000"/>
<path d="M1 7h2v8h-2z" fill="#10e010"/><path d="M3 9h2v6h-2z" fill="#3030e0"/>
<rect x="5.5" y="6.5" width="10" height="9" fill="#fff" stroke="#2020e0"/>
<rect x="5" y="6" width="10.5" height="1.6" fill="#2020e0"/>
<g fill="#e02020"><rect x="7" y="9" width="1.5" height="1.5"/><rect x="12" y="9" width="1.5" height="1.5"/><rect x="9.5" y="13" width="1.5" height="1.5"/><rect x="7" y="13" width="1.5" height="1.5"/></g>
<g fill="#20a020"><rect x="9.5" y="9" width="1.5" height="1.5"/><rect x="7" y="11" width="1.5" height="1.5"/><rect x="12" y="11" width="1.5" height="1.5"/></g>
<g fill="#2020e0"><rect x="9.5" y="11" width="1.5" height="1.5"/><rect x="12" y="13" width="1.5" height="1.5"/></g>
</svg>
<svg class="a" style="left:44px;top:114px" width="10" height="17" viewBox="0 0 10 17">
<path d="M4.5 .8c2.5 0 3.4 1.5 3.2 3.5l-1.2 6.5h-3.2l-1.2-6.5c-.2-2 .7-3.5 3.2-3.5z" fill="#e8e000" stroke="#202000" stroke-width="1"/>
<rect x="2.8" y="12.3" width="3.6" height="3" rx=".8" fill="#e8e000" stroke="#202000" stroke-width="1"/>
</svg>
<svg class="a" style="left:131px;top:116px" width="12" height="17" viewBox="0 0 12 17">
<circle cx="5.5" cy="2.8" r="2.3" fill="#20c0ff" stroke="#000" stroke-width="1"/>
<path d="M2 6.5h5v7.5h2v2h-8v-2h2v-5.5h-1z" fill="#2060f0" stroke="#000" stroke-width="1"/>
</svg>
<svg class="a" style="left:241px;top:116px" width="16" height="16" viewBox="0 0 16 16">
<path d="M5.5 .5h5v5h5v5h-5v5h-5v-5h-5v-5h5z" fill="#f00000" stroke="#600000" stroke-width=".7"/>
</svg>
<svg class="a" style="left:353px;top:116px" width="16" height="16" viewBox="0 0 16 16">
<path d="M8 8l6.5 6.5" stroke="#000" stroke-width="3.6" stroke-linecap="round"/>
<path d="M8 8l6.2 6.2" stroke="#1818d0" stroke-width="2"/>
<circle cx="5.5" cy="5.5" r="4.6" fill="#20e020" stroke="#000" stroke-width="1.1"/>
<path d="M3 6.5l3-3" stroke="#c0ffc0" stroke-width="1"/>
</svg>
<svg class="a" style="left:465px;top:116px" width="15" height="16" viewBox="0 0 15 16">
<defs><linearGradient id="fg" x1="0" y1="0" x2="1" y2="1"><stop offset="0" stop-color="#fff080"/><stop offset="1" stop-color="#b89000"/></linearGradient></defs>
<path d="M.8 2.5l2-2h4l1.5 2h5.5v12.5h-13z" fill="#e8c838" stroke="#000" stroke-width="1"/>
<rect x="2" y="5" width="11" height="9.5" fill="url(#fg)" stroke="#000" stroke-width=".8"/>
</svg>
<svg class="a" style="left:601px;top:116px" width="14" height="16" viewBox="0 0 14 16">
<defs><linearGradient id="tg" x1="0" y1="0" x2="1" y2="0"><stop offset="0" stop-color="#505050"/><stop offset=".3" stop-color="#f0f0f0"/><stop offset=".55" stop-color="#707070"/><stop offset="1" stop-color="#101010"/></linearGradient></defs>
<rect x="5" y=".5" width="4" height="2" fill="#333"/>
<rect x=".5" y="2" width="13" height="2.5" rx="1" fill="url(#tg)" stroke="#111" stroke-width=".8"/>
<path d="M1.8 4.5h10.4l-.8 11h-8.8z" fill="url(#tg)" stroke="#111" stroke-width=".8"/>
<path d="M5 6v8M9 6v8" stroke="#222" stroke-width=".6"/>
</svg>
<!-- checkmarks -->
<svg class="a" style="left:476px;top:264px" width="11" height="11" viewBox="0 0 11 11"><path d="M2 5.5l2.5 3 4.5-7" fill="none" stroke="#2d3fae" stroke-width="1.8"/></svg>
<svg class="a" style="left:476px;top:380px" width="11" height="11" viewBox="0 0 11 11"><path d="M2 5.5l2.5 3 4.5-7" fill="none" stroke="#2d3fae" stroke-width="1.8"/></svg>
<svg class="a" style="left:476px;top:411px" width="11" height="11" viewBox="0 0 11 11"><path d="M2 5.5l2.5 3 4.5-7" fill="none" stroke="#2d3fae" stroke-width="1.8"/></svg>
<!-- title icon -->
<svg class="a" style="left:8px;top:7px" width="17" height="16" viewBox="0 0 17 16">
<path d="M1 10l7-8.5 8 5.5-7 8.5z" fill="#1e1e1e" stroke="#505050" stroke-width=".5"/>
<ellipse cx="9.2" cy="6.8" rx="3.6" ry="3" transform="rotate(-35 9.2 6.8)" fill="#f4b040"/>
<circle cx="9.2" cy="6.8" r="1" fill="#9aa0a8"/>
<path d="M5 11l2-2.5 2 1.4-2 2.5z" fill="#777"/>
</svg>

<svg class="a" style="left:0;top:0" width="675" height="728" shape-rendering="crispEdges">
<path d="M170 9h1v1h-1zM148 10h6v1h-6zM160 10h1v1h-1zM170 10h1v1h-1zM174 10h10v1h-10zM190 10h1v1h-1zM202 10h6v1h-6zM214 10h1v1h-1zM227 10h1v1h-1zM234 10h9v1h-9zM248 10h1v1h-1zM250 10h5v1h-5zM262 10h1v1h-1zM143 11h4v1h-4zM150 11h1v1h-1zM158 11h6v1h-6zM170 11h1v1h-1zM174 11h1v1h-1zM178 11h1v1h-1zM183 11h1v1h-1zM185 11h11v1h-11zM197 11h4v1h-4zM204 11h1v1h-1zM212 11h6v1h-6zM222 11h10v1h-10zM234 11h1v1h-1zM238 11h1v1h-1zM242 11h1v1h-1zM245 11h3v1h-3zM250 11h1v1h-1zM254 11h1v1h-1zM258 11h10v1h-10zM145 12h1v1h-1zM148 12h6v1h-6zM158 12h1v1h-1zM160 12h1v1h-1zM163 12h1v1h-1zM169 12h1v1h-1zM174 12h1v1h-1zM178 12h1v1h-1zM183 12h1v1h-1zM190 12h1v1h-1zM199 12h1v1h-1zM202 12h6v1h-6zM212 12h1v1h-1zM214 12h1v1h-1zM217 12h1v1h-1zM222 12h1v1h-1zM224 12h1v1h-1zM231 12h1v1h-1zM234 12h1v1h-1zM238 12h1v1h-1zM242 12h1v1h-1zM247 12h1v1h-1zM250 12h1v1h-1zM254 12h1v1h-1zM258 12h1v1h-1zM145 13h1v1h-1zM148 13h1v1h-1zM150 13h1v1h-1zM153 13h1v1h-1zM158 13h1v1h-1zM161 13h1v1h-1zM163 13h1v1h-1zM169 13h1v1h-1zM174 13h8v1h-8zM183 13h1v1h-1zM189 13h1v1h-1zM191 13h1v1h-1zM199 13h1v1h-1zM202 13h1v1h-1zM204 13h1v1h-1zM207 13h1v1h-1zM212 13h1v1h-1zM215 13h1v1h-1zM217 13h1v1h-1zM221 13h1v1h-1zM225 13h1v1h-1zM227 13h1v1h-1zM230 13h1v1h-1zM234 13h9v1h-9zM245 13h4v1h-4zM250 13h5v1h-5zM258 13h1v1h-1zM260 13h6v1h-6zM144 14h3v1h-3zM148 14h6v1h-6zM156 14h10v1h-10zM169 14h1v1h-1zM174 14h1v1h-1zM178 14h1v1h-1zM183 14h1v1h-1zM187 14h3v1h-3zM192 14h2v1h-2zM198 14h3v1h-3zM202 14h6v1h-6zM210 14h10v1h-10zM223 14h1v1h-1zM227 14h1v1h-1zM234 14h1v1h-1zM238 14h1v1h-1zM242 14h1v1h-1zM247 14h1v1h-1zM258 14h1v1h-1zM262 14h1v1h-1zM264 14h1v1h-1zM143 15h2v1h-2zM146 15h1v1h-1zM148 15h1v1h-1zM150 15h1v1h-1zM153 15h1v1h-1zM158 15h1v1h-1zM160 15h1v1h-1zM163 15h1v1h-1zM168 15h1v1h-1zM174 15h1v1h-1zM176 15h5v1h-5zM183 15h1v1h-1zM185 15h2v1h-2zM190 15h1v1h-1zM194 15h2v1h-2zM197 15h2v1h-2zM200 15h1v1h-1zM202 15h1v1h-1zM204 15h1v1h-1zM207 15h1v1h-1zM212 15h1v1h-1zM214 15h1v1h-1zM217 15h1v1h-1zM224 15h1v1h-1zM227 15h1v1h-1zM234 15h1v1h-1zM238 15h1v1h-1zM242 15h1v1h-1zM247 15h2v1h-2zM250 15h5v1h-5zM258 15h1v1h-1zM263 15h1v1h-1zM144 16h1v1h-1zM146 16h1v1h-1zM148 16h6v1h-6zM157 16h1v1h-1zM161 16h1v1h-1zM163 16h1v1h-1zM168 16h1v1h-1zM174 16h1v1h-1zM176 16h1v1h-1zM180 16h1v1h-1zM183 16h1v1h-1zM198 16h1v1h-1zM200 16h1v1h-1zM202 16h6v1h-6zM211 16h1v1h-1zM215 16h1v1h-1zM217 16h1v1h-1zM222 16h10v1h-10zM234 16h9v1h-9zM246 16h2v1h-2zM249 16h1v1h-1zM252 16h1v1h-1zM258 16h10v1h-10zM144 17h1v1h-1zM146 17h2v1h-2zM150 17h1v1h-1zM157 17h8v1h-8zM168 17h1v1h-1zM174 17h1v1h-1zM176 17h1v1h-1zM180 17h1v1h-1zM183 17h1v1h-1zM188 17h1v1h-1zM190 17h1v1h-1zM194 17h1v1h-1zM198 17h1v1h-1zM200 17h2v1h-2zM204 17h1v1h-1zM211 17h8v1h-8zM227 17h1v1h-1zM234 17h1v1h-1zM238 17h1v1h-1zM242 17h1v1h-1zM246 17h2v1h-2zM250 17h5v1h-5zM258 17h1v1h-1zM263 17h1v1h-1zM266 17h1v1h-1zM144 18h3v1h-3zM148 18h1v1h-1zM150 18h1v1h-1zM157 18h1v1h-1zM159 18h1v1h-1zM162 18h1v1h-1zM164 18h1v1h-1zM167 18h1v1h-1zM174 18h1v1h-1zM176 18h5v1h-5zM183 18h1v1h-1zM186 18h1v1h-1zM188 18h1v1h-1zM191 18h1v1h-1zM193 18h1v1h-1zM195 18h1v1h-1zM198 18h3v1h-3zM202 18h1v1h-1zM204 18h1v1h-1zM211 18h1v1h-1zM213 18h1v1h-1zM216 18h1v1h-1zM218 18h1v1h-1zM226 18h1v1h-1zM228 18h1v1h-1zM234 18h1v1h-1zM238 18h1v1h-1zM242 18h1v1h-1zM245 18h1v1h-1zM247 18h1v1h-1zM252 18h1v1h-1zM258 18h1v1h-1zM263 18h1v1h-1zM144 19h1v1h-1zM146 19h1v1h-1zM149 19h2v1h-2zM157 19h1v1h-1zM159 19h1v1h-1zM162 19h1v1h-1zM164 19h1v1h-1zM167 19h1v1h-1zM174 19h1v1h-1zM183 19h1v1h-1zM186 19h1v1h-1zM188 19h1v1h-1zM193 19h1v1h-1zM195 19h1v1h-1zM198 19h1v1h-1zM200 19h1v1h-1zM203 19h2v1h-2zM211 19h1v1h-1zM213 19h1v1h-1zM216 19h1v1h-1zM218 19h1v1h-1zM225 19h1v1h-1zM229 19h1v1h-1zM233 19h1v1h-1zM238 19h1v1h-1zM242 19h1v1h-1zM247 19h1v1h-1zM252 19h1v1h-1zM257 19h1v1h-1zM263 19h1v1h-1zM147 20h2v1h-2zM151 20h3v1h-3zM155 20h11v1h-11zM167 20h1v1h-1zM174 20h10v1h-10zM185 20h1v1h-1zM189 20h5v1h-5zM201 20h2v1h-2zM205 20h3v1h-3zM209 20h11v1h-11zM222 20h3v1h-3zM230 20h2v1h-2zM233 20h1v1h-1zM238 20h1v1h-1zM241 20h2v1h-2zM247 20h1v1h-1zM249 20h7v1h-7zM257 20h1v1h-1zM261 20h3v1h-3z" fill="#000"/>
<path d="M19 34h1v1h-1zM30 34h1v1h-1zM34 34h1v1h-1zM20 35h1v1h-1zM30 35h1v1h-1zM32 35h1v1h-1zM34 35h1v1h-1zM15 36h11v1h-11zM29 36h1v1h-1zM32 36h1v1h-1zM34 36h1v1h-1zM18 37h1v1h-1zM22 37h1v1h-1zM29 37h1v1h-1zM31 37h6v1h-6zM18 38h1v1h-1zM22 38h1v1h-1zM28 38h3v1h-3zM34 38h1v1h-1zM18 39h1v1h-1zM22 39h1v1h-1zM27 39h1v1h-1zM29 39h1v1h-1zM34 39h1v1h-1zM19 40h1v1h-1zM21 40h1v1h-1zM29 40h1v1h-1zM31 40h7v1h-7zM19 41h1v1h-1zM21 41h1v1h-1zM29 41h1v1h-1zM34 41h1v1h-1zM20 42h1v1h-1zM29 42h1v1h-1zM34 42h1v1h-1zM18 43h2v1h-2zM21 43h2v1h-2zM29 43h1v1h-1zM34 43h1v1h-1zM15 44h3v1h-3zM23 44h3v1h-3zM29 44h1v1h-1zM34 44h1v1h-1z" fill="#000"/>
<path d="M74 34h1v1h-1zM90 34h1v1h-1zM72 35h5v1h-5zM78 35h4v1h-4zM84 35h4v1h-4zM90 35h1v1h-1zM74 36h1v1h-1zM78 36h1v1h-1zM81 36h1v1h-1zM84 36h1v1h-1zM87 36h1v1h-1zM90 36h1v1h-1zM72 37h5v1h-5zM78 37h1v1h-1zM80 37h1v1h-1zM84 37h1v1h-1zM87 37h1v1h-1zM89 37h5v1h-5zM74 38h1v1h-1zM78 38h1v1h-1zM81 38h1v1h-1zM84 38h4v1h-4zM90 38h1v1h-1zM93 38h1v1h-1zM71 39h6v1h-6zM78 39h4v1h-4zM84 39h1v1h-1zM87 39h1v1h-1zM90 39h1v1h-1zM93 39h1v1h-1zM73 40h1v1h-1zM76 40h1v1h-1zM78 40h1v1h-1zM84 40h4v1h-4zM90 40h1v1h-1zM93 40h1v1h-1zM72 41h9v1h-9zM84 41h1v1h-1zM87 41h1v1h-1zM90 41h1v1h-1zM93 41h1v1h-1zM73 42h1v1h-1zM76 42h1v1h-1zM80 42h1v1h-1zM84 42h1v1h-1zM86 42h4v1h-4zM93 42h1v1h-1zM73 43h1v1h-1zM76 43h1v1h-1zM79 43h2v1h-2zM83 43h3v1h-3zM89 43h1v1h-1zM91 43h1v1h-1zM93 43h1v1h-1zM76 44h1v1h-1zM88 44h1v1h-1zM92 44h1v1h-1z" fill="#000"/>
<path d="M537 62h1v1h-1zM541 62h6v1h-6zM554 62h1v1h-1zM538 63h1v1h-1zM541 63h1v1h-1zM546 63h1v1h-1zM550 63h1v1h-1zM554 63h1v1h-1zM558 63h1v1h-1zM538 64h1v1h-1zM541 64h6v1h-6zM550 64h1v1h-1zM554 64h1v1h-1zM558 64h1v1h-1zM541 65h1v1h-1zM546 65h1v1h-1zM550 65h1v1h-1zM554 65h1v1h-1zM558 65h1v1h-1zM537 66h2v1h-2zM541 66h6v1h-6zM550 66h9v1h-9zM538 67h1v1h-1zM541 67h1v1h-1zM554 67h1v1h-1zM538 68h1v1h-1zM541 68h1v1h-1zM543 68h2v1h-2zM546 68h1v1h-1zM549 68h1v1h-1zM554 68h1v1h-1zM559 68h1v1h-1zM538 69h1v1h-1zM541 69h1v1h-1zM545 69h1v1h-1zM549 69h1v1h-1zM554 69h1v1h-1zM559 69h1v1h-1zM538 70h1v1h-1zM541 70h3v1h-3zM546 70h1v1h-1zM549 70h1v1h-1zM554 70h1v1h-1zM559 70h1v1h-1zM537 71h1v1h-1zM539 71h2v1h-2zM549 71h1v1h-1zM554 71h1v1h-1zM559 71h1v1h-1zM537 72h1v1h-1zM541 72h7v1h-7zM549 72h11v1h-11z" fill="#000"/>
<path d="M73 99h1v1h-1zM84 99h1v1h-1zM88 99h1v1h-1zM96 99h1v1h-1zM100 99h1v1h-1zM109 99h1v1h-1zM111 99h1v1h-1zM74 100h1v1h-1zM84 100h1v1h-1zM86 100h1v1h-1zM88 100h1v1h-1zM94 100h9v1h-9zM105 100h1v1h-1zM109 100h1v1h-1zM112 100h1v1h-1zM69 101h11v1h-11zM83 101h1v1h-1zM86 101h1v1h-1zM88 101h1v1h-1zM96 101h1v1h-1zM100 101h1v1h-1zM106 101h1v1h-1zM109 101h7v1h-7zM72 102h1v1h-1zM76 102h1v1h-1zM83 102h1v1h-1zM85 102h6v1h-6zM96 102h3v1h-3zM100 102h1v1h-1zM106 102h1v1h-1zM108 102h2v1h-2zM112 102h1v1h-1zM72 103h1v1h-1zM76 103h1v1h-1zM82 103h3v1h-3zM88 103h1v1h-1zM96 103h1v1h-1zM98 103h3v1h-3zM109 103h1v1h-1zM112 103h1v1h-1zM72 104h1v1h-1zM76 104h1v1h-1zM81 104h1v1h-1zM83 104h1v1h-1zM88 104h1v1h-1zM96 104h1v1h-1zM100 104h1v1h-1zM107 104h1v1h-1zM109 104h6v1h-6zM73 105h1v1h-1zM75 105h1v1h-1zM83 105h1v1h-1zM85 105h7v1h-7zM93 105h11v1h-11zM107 105h1v1h-1zM109 105h1v1h-1zM112 105h1v1h-1zM73 106h1v1h-1zM75 106h1v1h-1zM83 106h1v1h-1zM88 106h1v1h-1zM95 106h1v1h-1zM98 106h1v1h-1zM101 106h1v1h-1zM105 106h2v1h-2zM109 106h6v1h-6zM74 107h1v1h-1zM83 107h1v1h-1zM88 107h1v1h-1zM93 107h2v1h-2zM96 107h5v1h-5zM102 107h2v1h-2zM106 107h1v1h-1zM109 107h1v1h-1zM112 107h1v1h-1zM72 108h2v1h-2zM75 108h2v1h-2zM83 108h1v1h-1zM88 108h1v1h-1zM98 108h1v1h-1zM106 108h1v1h-1zM109 108h1v1h-1zM112 108h1v1h-1zM69 109h3v1h-3zM77 109h3v1h-3zM83 109h1v1h-1zM88 109h1v1h-1zM93 109h11v1h-11zM106 109h1v1h-1zM109 109h7v1h-7z" fill="#000"/>
<path d="M197 99h1v1h-1zM201 99h1v1h-1zM209 99h1v1h-1zM220 99h1v1h-1zM222 99h1v1h-1zM229 99h1v1h-1zM233 99h5v1h-5zM241 99h4v1h-4zM246 99h4v1h-4zM192 100h4v1h-4zM198 100h1v1h-1zM200 100h1v1h-1zM207 100h6v1h-6zM217 100h1v1h-1zM220 100h1v1h-1zM222 100h1v1h-1zM230 100h1v1h-1zM233 100h1v1h-1zM237 100h1v1h-1zM241 100h1v1h-1zM244 100h1v1h-1zM246 100h1v1h-1zM249 100h1v1h-1zM194 101h1v1h-1zM196 101h7v1h-7zM207 101h1v1h-1zM209 101h1v1h-1zM212 101h1v1h-1zM217 101h1v1h-1zM220 101h1v1h-1zM222 101h5v1h-5zM228 101h4v1h-4zM233 101h1v1h-1zM235 101h1v1h-1zM237 101h1v1h-1zM241 101h1v1h-1zM244 101h1v1h-1zM246 101h1v1h-1zM249 101h1v1h-1zM194 102h1v1h-1zM197 102h1v1h-1zM200 102h1v1h-1zM207 102h1v1h-1zM210 102h1v1h-1zM212 102h1v1h-1zM217 102h1v1h-1zM220 102h1v1h-1zM222 102h1v1h-1zM231 102h1v1h-1zM233 102h1v1h-1zM235 102h1v1h-1zM237 102h1v1h-1zM241 102h4v1h-4zM246 102h4v1h-4zM193 103h3v1h-3zM197 103h1v1h-1zM200 103h1v1h-1zM202 103h1v1h-1zM205 103h10v1h-10zM217 103h1v1h-1zM220 103h2v1h-2zM224 103h1v1h-1zM230 103h1v1h-1zM233 103h1v1h-1zM235 103h1v1h-1zM237 103h1v1h-1zM245 103h1v1h-1zM248 103h1v1h-1zM192 104h2v1h-2zM195 104h2v1h-2zM198 104h2v1h-2zM202 104h1v1h-1zM207 104h1v1h-1zM209 104h1v1h-1zM212 104h1v1h-1zM217 104h1v1h-1zM220 104h1v1h-1zM225 104h1v1h-1zM229 104h3v1h-3zM233 104h1v1h-1zM235 104h1v1h-1zM237 104h1v1h-1zM240 104h11v1h-11zM193 105h1v1h-1zM195 105h7v1h-7zM206 105h1v1h-1zM210 105h1v1h-1zM212 105h1v1h-1zM220 105h1v1h-1zM228 105h1v1h-1zM230 105h1v1h-1zM233 105h1v1h-1zM235 105h1v1h-1zM237 105h1v1h-1zM243 105h1v1h-1zM247 105h1v1h-1zM193 106h1v1h-1zM195 106h1v1h-1zM198 106h1v1h-1zM201 106h1v1h-1zM206 106h8v1h-8zM217 106h9v1h-9zM230 106h1v1h-1zM235 106h1v1h-1zM240 106h5v1h-5zM246 106h5v1h-5zM193 107h3v1h-3zM197 107h1v1h-1zM200 107h1v1h-1zM206 107h1v1h-1zM208 107h1v1h-1zM211 107h1v1h-1zM213 107h1v1h-1zM217 107h1v1h-1zM220 107h1v1h-1zM222 107h1v1h-1zM225 107h1v1h-1zM230 107h1v1h-1zM234 107h2v1h-2zM238 107h1v1h-1zM241 107h1v1h-1zM244 107h1v1h-1zM246 107h1v1h-1zM249 107h1v1h-1zM193 108h1v1h-1zM195 108h2v1h-2zM198 108h2v1h-2zM201 108h1v1h-1zM206 108h1v1h-1zM208 108h1v1h-1zM211 108h1v1h-1zM213 108h1v1h-1zM217 108h1v1h-1zM220 108h1v1h-1zM222 108h1v1h-1zM225 108h1v1h-1zM230 108h1v1h-1zM233 108h1v1h-1zM235 108h1v1h-1zM238 108h1v1h-1zM241 108h1v1h-1zM244 108h1v1h-1zM246 108h1v1h-1zM249 108h1v1h-1zM195 109h3v1h-3zM199 109h2v1h-2zM202 109h1v1h-1zM204 109h11v1h-11zM216 109h11v1h-11zM230 109h1v1h-1zM232 109h1v1h-1zM236 109h3v1h-3zM241 109h4v1h-4zM246 109h4v1h-4z" fill="#000"/>
<path d="M328 99h1v1h-1zM343 99h1v1h-1zM353 99h4v1h-4zM365 99h1v1h-1zM374 99h1v1h-1zM379 99h1v1h-1zM388 99h7v1h-7zM326 100h7v1h-7zM337 100h4v1h-4zM343 100h1v1h-1zM348 100h3v1h-3zM353 100h1v1h-1zM356 100h1v1h-1zM361 100h9v1h-9zM374 100h4v1h-4zM379 100h4v1h-4zM384 100h5v1h-5zM391 100h1v1h-1zM394 100h1v1h-1zM326 101h1v1h-1zM332 101h1v1h-1zM343 101h1v1h-1zM348 101h1v1h-1zM350 101h1v1h-1zM353 101h4v1h-4zM363 101h1v1h-1zM367 101h1v1h-1zM373 101h1v1h-1zM375 101h1v1h-1zM378 101h1v1h-1zM380 101h1v1h-1zM386 101h1v1h-1zM388 101h7v1h-7zM326 102h1v1h-1zM332 102h1v1h-1zM342 102h5v1h-5zM348 102h1v1h-1zM350 102h4v1h-4zM355 102h4v1h-4zM364 102h1v1h-1zM366 102h1v1h-1zM372 102h11v1h-11zM386 102h1v1h-1zM388 102h1v1h-1zM391 102h1v1h-1zM394 102h1v1h-1zM326 103h7v1h-7zM336 103h6v1h-6zM343 103h1v1h-1zM346 103h1v1h-1zM348 103h1v1h-1zM350 103h1v1h-1zM353 103h1v1h-1zM355 103h1v1h-1zM358 103h1v1h-1zM360 103h11v1h-11zM372 103h1v1h-1zM382 103h1v1h-1zM386 103h1v1h-1zM388 103h1v1h-1zM391 103h1v1h-1zM394 103h1v1h-1zM326 104h1v1h-1zM332 104h1v1h-1zM338 104h1v1h-1zM343 104h1v1h-1zM346 104h1v1h-1zM348 104h1v1h-1zM350 104h4v1h-4zM355 104h4v1h-4zM374 104h7v1h-7zM384 104h11v1h-11zM326 105h7v1h-7zM338 105h1v1h-1zM343 105h1v1h-1zM346 105h1v1h-1zM348 105h3v1h-3zM354 105h1v1h-1zM362 105h7v1h-7zM374 105h1v1h-1zM380 105h1v1h-1zM386 105h1v1h-1zM391 105h1v1h-1zM326 106h1v1h-1zM332 106h1v1h-1zM337 106h1v1h-1zM340 106h1v1h-1zM343 106h1v1h-1zM346 106h1v1h-1zM351 106h8v1h-8zM362 106h1v1h-1zM368 106h1v1h-1zM374 106h8v1h-8zM386 106h1v1h-1zM389 106h5v1h-5zM326 107h1v1h-1zM332 107h1v1h-1zM336 107h5v1h-5zM342 107h1v1h-1zM346 107h1v1h-1zM352 107h1v1h-1zM354 107h1v1h-1zM356 107h1v1h-1zM362 107h7v1h-7zM374 107h1v1h-1zM381 107h1v1h-1zM386 107h2v1h-2zM391 107h1v1h-1zM326 108h7v1h-7zM340 108h1v1h-1zM342 108h1v1h-1zM346 108h1v1h-1zM351 108h1v1h-1zM354 108h1v1h-1zM357 108h1v1h-1zM362 108h1v1h-1zM368 108h1v1h-1zM374 108h1v1h-1zM381 108h1v1h-1zM384 108h2v1h-2zM391 108h1v1h-1zM326 109h1v1h-1zM332 109h1v1h-1zM341 109h1v1h-1zM344 109h2v1h-2zM350 109h1v1h-1zM354 109h1v1h-1zM358 109h1v1h-1zM362 109h7v1h-7zM374 109h8v1h-8zM388 109h7v1h-7z" fill="#000"/>
<path d="M472 99h3v1h-3zM479 99h1v1h-1zM486 99h1v1h-1zM500 99h1v1h-1zM508 99h6v1h-6zM472 100h1v1h-1zM474 100h2v1h-2zM477 100h6v1h-6zM486 100h1v1h-1zM489 100h4v1h-4zM496 100h11v1h-11zM509 100h1v1h-1zM512 100h1v1h-1zM514 100h5v1h-5zM472 101h1v1h-1zM474 101h1v1h-1zM476 101h1v1h-1zM478 101h1v1h-1zM486 101h1v1h-1zM489 101h1v1h-1zM492 101h1v1h-1zM499 101h1v1h-1zM509 101h1v1h-1zM512 101h1v1h-1zM514 101h1v1h-1zM518 101h1v1h-1zM472 102h2v1h-2zM477 102h5v1h-5zM484 102h6v1h-6zM492 102h1v1h-1zM498 102h1v1h-1zM500 102h6v1h-6zM509 102h4v1h-4zM514 102h1v1h-1zM518 102h1v1h-1zM472 103h1v1h-1zM474 103h1v1h-1zM478 103h1v1h-1zM481 103h1v1h-1zM486 103h1v1h-1zM489 103h1v1h-1zM492 103h1v1h-1zM498 103h1v1h-1zM504 103h1v1h-1zM509 103h1v1h-1zM512 103h1v1h-1zM515 103h1v1h-1zM517 103h1v1h-1zM472 104h1v1h-1zM474 104h3v1h-3zM478 104h4v1h-4zM485 104h3v1h-3zM489 104h1v1h-1zM492 104h1v1h-1zM497 104h2v1h-2zM503 104h1v1h-1zM509 104h4v1h-4zM515 104h1v1h-1zM517 104h1v1h-1zM472 105h1v1h-1zM474 105h1v1h-1zM476 105h1v1h-1zM478 105h1v1h-1zM481 105h1v1h-1zM485 105h2v1h-2zM488 105h2v1h-2zM492 105h1v1h-1zM496 105h1v1h-1zM498 105h9v1h-9zM509 105h1v1h-1zM512 105h1v1h-1zM516 105h1v1h-1zM472 106h2v1h-2zM476 106h1v1h-1zM478 106h4v1h-4zM484 106h1v1h-1zM486 106h1v1h-1zM489 106h1v1h-1zM492 106h1v1h-1zM498 106h1v1h-1zM503 106h1v1h-1zM509 106h1v1h-1zM512 106h2v1h-2zM516 106h1v1h-1zM472 107h1v1h-1zM476 107h1v1h-1zM478 107h1v1h-1zM481 107h1v1h-1zM484 107h1v1h-1zM486 107h1v1h-1zM489 107h1v1h-1zM492 107h1v1h-1zM498 107h1v1h-1zM503 107h1v1h-1zM508 107h5v1h-5zM515 107h1v1h-1zM517 107h1v1h-1zM472 108h1v1h-1zM476 108h2v1h-2zM486 108h1v1h-1zM488 108h1v1h-1zM492 108h1v1h-1zM494 108h1v1h-1zM498 108h1v1h-1zM503 108h1v1h-1zM512 108h1v1h-1zM514 108h1v1h-1zM517 108h1v1h-1zM472 109h1v1h-1zM475 109h1v1h-1zM478 109h5v1h-5zM486 109h2v1h-2zM492 109h3v1h-3zM498 109h1v1h-1zM501 109h3v1h-3zM512 109h2v1h-2zM518 109h1v1h-1z" fill="#000"/>
<path d="M594 99h4v1h-4zM600 99h1v1h-1zM603 99h1v1h-1zM608 99h1v1h-1zM618 99h1v1h-1zM620 99h5v1h-5zM628 99h1v1h-1zM631 99h1v1h-1zM637 99h1v1h-1zM639 99h1v1h-1zM594 100h1v1h-1zM597 100h1v1h-1zM600 100h1v1h-1zM603 100h1v1h-1zM608 100h1v1h-1zM619 100h2v1h-2zM624 100h1v1h-1zM626 100h1v1h-1zM628 100h1v1h-1zM632 100h1v1h-1zM637 100h1v1h-1zM640 100h1v1h-1zM594 101h1v1h-1zM596 101h1v1h-1zM599 101h1v1h-1zM603 101h1v1h-1zM606 101h6v1h-6zM613 101h4v1h-4zM620 101h1v1h-1zM622 101h1v1h-1zM624 101h1v1h-1zM626 101h1v1h-1zM628 101h1v1h-1zM633 101h8v1h-8zM594 102h2v1h-2zM599 102h6v1h-6zM608 102h1v1h-1zM611 102h1v1h-1zM613 102h1v1h-1zM616 102h1v1h-1zM618 102h1v1h-1zM620 102h1v1h-1zM622 102h1v1h-1zM624 102h1v1h-1zM626 102h1v1h-1zM628 102h1v1h-1zM637 102h1v1h-1zM594 103h1v1h-1zM596 103h1v1h-1zM598 103h2v1h-2zM603 103h1v1h-1zM608 103h1v1h-1zM611 103h1v1h-1zM613 103h1v1h-1zM616 103h1v1h-1zM619 103h2v1h-2zM622 103h1v1h-1zM624 103h1v1h-1zM626 103h1v1h-1zM628 103h1v1h-1zM630 103h3v1h-3zM634 103h4v1h-4zM594 104h1v1h-1zM597 104h1v1h-1zM599 104h1v1h-1zM601 104h1v1h-1zM603 104h1v1h-1zM608 104h1v1h-1zM611 104h1v1h-1zM613 104h1v1h-1zM616 104h1v1h-1zM620 104h1v1h-1zM622 104h1v1h-1zM624 104h1v1h-1zM626 104h1v1h-1zM628 104h1v1h-1zM632 104h1v1h-1zM635 104h1v1h-1zM637 104h1v1h-1zM594 105h1v1h-1zM597 105h1v1h-1zM599 105h1v1h-1zM602 105h2v1h-2zM608 105h1v1h-1zM611 105h1v1h-1zM613 105h1v1h-1zM616 105h1v1h-1zM620 105h1v1h-1zM622 105h1v1h-1zM624 105h1v1h-1zM626 105h1v1h-1zM628 105h1v1h-1zM632 105h1v1h-1zM635 105h1v1h-1zM637 105h1v1h-1zM594 106h2v1h-2zM597 106h1v1h-1zM599 106h1v1h-1zM603 106h1v1h-1zM608 106h1v1h-1zM611 106h1v1h-1zM613 106h1v1h-1zM616 106h1v1h-1zM618 106h2v1h-2zM622 106h1v1h-1zM626 106h1v1h-1zM628 106h1v1h-1zM632 106h1v1h-1zM635 106h1v1h-1zM638 106h1v1h-1zM640 106h1v1h-1zM594 107h1v1h-1zM596 107h1v1h-1zM599 107h1v1h-1zM603 107h1v1h-1zM607 107h1v1h-1zM611 107h1v1h-1zM613 107h1v1h-1zM616 107h1v1h-1zM619 107h1v1h-1zM621 107h1v1h-1zM623 107h1v1h-1zM628 107h1v1h-1zM632 107h1v1h-1zM635 107h2v1h-2zM638 107h1v1h-1zM640 107h1v1h-1zM594 108h1v1h-1zM599 108h1v1h-1zM603 108h1v1h-1zM607 108h1v1h-1zM609 108h1v1h-1zM611 108h1v1h-1zM613 108h4v1h-4zM619 108h2v1h-2zM624 108h1v1h-1zM628 108h1v1h-1zM632 108h3v1h-3zM639 108h2v1h-2zM594 109h1v1h-1zM599 109h1v1h-1zM602 109h2v1h-2zM606 109h1v1h-1zM610 109h1v1h-1zM613 109h1v1h-1zM616 109h1v1h-1zM619 109h1v1h-1zM626 109h3v1h-3zM632 109h1v1h-1zM640 109h1v1h-1z" fill="#000"/>
<path d="M67 117h1v1h-1zM71 117h1v1h-1zM80 117h1v1h-1zM82 117h1v1h-1zM65 118h9v1h-9zM76 118h1v1h-1zM80 118h1v1h-1zM83 118h1v1h-1zM67 119h1v1h-1zM71 119h1v1h-1zM77 119h1v1h-1zM80 119h7v1h-7zM67 120h3v1h-3zM71 120h1v1h-1zM77 120h1v1h-1zM79 120h2v1h-2zM83 120h1v1h-1zM67 121h1v1h-1zM69 121h3v1h-3zM80 121h1v1h-1zM83 121h1v1h-1zM67 122h1v1h-1zM71 122h1v1h-1zM78 122h1v1h-1zM80 122h6v1h-6zM64 123h11v1h-11zM78 123h1v1h-1zM80 123h1v1h-1zM83 123h1v1h-1zM66 124h1v1h-1zM69 124h1v1h-1zM72 124h1v1h-1zM76 124h2v1h-2zM80 124h6v1h-6zM64 125h2v1h-2zM67 125h5v1h-5zM73 125h2v1h-2zM77 125h1v1h-1zM80 125h1v1h-1zM83 125h1v1h-1zM69 126h1v1h-1zM77 126h1v1h-1zM80 126h1v1h-1zM83 126h1v1h-1zM64 127h11v1h-11zM77 127h1v1h-1zM80 127h7v1h-7z" fill="#000"/>
<path d="M157 119h1v1h-1zM161 119h1v1h-1zM169 119h1v1h-1zM179 119h1v1h-1zM182 119h1v1h-1zM192 119h1v1h-1zM152 120h4v1h-4zM158 120h1v1h-1zM160 120h1v1h-1zM167 120h6v1h-6zM179 120h1v1h-1zM183 120h1v1h-1zM190 120h7v1h-7zM154 121h1v1h-1zM156 121h7v1h-7zM167 121h1v1h-1zM169 121h1v1h-1zM172 121h1v1h-1zM178 121h1v1h-1zM180 121h7v1h-7zM190 121h1v1h-1zM196 121h1v1h-1zM154 122h1v1h-1zM157 122h1v1h-1zM160 122h1v1h-1zM167 122h1v1h-1zM170 122h1v1h-1zM172 122h1v1h-1zM178 122h1v1h-1zM190 122h7v1h-7zM153 123h3v1h-3zM157 123h1v1h-1zM160 123h1v1h-1zM162 123h1v1h-1zM165 123h10v1h-10zM177 123h2v1h-2zM181 123h5v1h-5zM190 123h1v1h-1zM196 123h1v1h-1zM152 124h2v1h-2zM155 124h2v1h-2zM158 124h2v1h-2zM162 124h1v1h-1zM167 124h1v1h-1zM169 124h1v1h-1zM172 124h1v1h-1zM176 124h1v1h-1zM178 124h1v1h-1zM190 124h7v1h-7zM153 125h1v1h-1zM155 125h7v1h-7zM166 125h1v1h-1zM170 125h1v1h-1zM172 125h1v1h-1zM178 125h1v1h-1zM181 125h5v1h-5zM190 125h1v1h-1zM196 125h1v1h-1zM153 126h1v1h-1zM155 126h1v1h-1zM158 126h1v1h-1zM161 126h1v1h-1zM166 126h8v1h-8zM178 126h1v1h-1zM190 126h7v1h-7zM153 127h3v1h-3zM157 127h1v1h-1zM160 127h1v1h-1zM166 127h1v1h-1zM168 127h1v1h-1zM171 127h1v1h-1zM173 127h1v1h-1zM178 127h1v1h-1zM181 127h5v1h-5zM189 127h1v1h-1zM191 127h1v1h-1zM193 127h1v1h-1zM197 127h1v1h-1zM153 128h1v1h-1zM155 128h2v1h-2zM158 128h2v1h-2zM161 128h1v1h-1zM166 128h1v1h-1zM168 128h1v1h-1zM171 128h1v1h-1zM173 128h1v1h-1zM178 128h1v1h-1zM181 128h1v1h-1zM185 128h1v1h-1zM189 128h1v1h-1zM191 128h1v1h-1zM194 128h1v1h-1zM196 128h1v1h-1zM198 128h1v1h-1zM155 129h3v1h-3zM159 129h2v1h-2zM162 129h1v1h-1zM164 129h11v1h-11zM178 129h1v1h-1zM181 129h5v1h-5zM188 129h1v1h-1zM192 129h5v1h-5z" fill="#000"/>
<path d="M266 119h1v1h-1zM271 119h1v1h-1zM282 119h1v1h-1zM291 119h1v1h-1zM295 119h2v1h-2zM305 119h1v1h-1zM266 120h3v1h-3zM270 120h4v1h-4zM277 120h10v1h-10zM288 120h1v1h-1zM291 120h1v1h-1zM295 120h1v1h-1zM297 120h1v1h-1zM300 120h11v1h-11zM265 121h1v1h-1zM268 121h1v1h-1zM271 121h1v1h-1zM273 121h1v1h-1zM277 121h1v1h-1zM282 121h1v1h-1zM289 121h1v1h-1zM291 121h1v1h-1zM295 121h1v1h-1zM305 121h1v1h-1zM264 122h2v1h-2zM268 122h7v1h-7zM277 122h1v1h-1zM279 122h7v1h-7zM289 122h1v1h-1zM291 122h8v1h-8zM304 122h1v1h-1zM306 122h1v1h-1zM265 123h1v1h-1zM267 123h1v1h-1zM271 123h1v1h-1zM273 123h1v1h-1zM277 123h1v1h-1zM282 123h1v1h-1zM285 123h1v1h-1zM291 123h1v1h-1zM295 123h1v1h-1zM302 123h3v1h-3zM307 123h2v1h-2zM265 124h1v1h-1zM267 124h8v1h-8zM277 124h10v1h-10zM291 124h1v1h-1zM295 124h1v1h-1zM300 124h2v1h-2zM305 124h1v1h-1zM309 124h2v1h-2zM265 125h1v1h-1zM269 125h1v1h-1zM271 125h1v1h-1zM277 125h1v1h-1zM282 125h1v1h-1zM285 125h1v1h-1zM290 125h2v1h-2zM294 125h1v1h-1zM296 125h1v1h-1zM265 126h1v1h-1zM267 126h1v1h-1zM269 126h6v1h-6zM277 126h1v1h-1zM279 126h7v1h-7zM288 126h2v1h-2zM291 126h1v1h-1zM294 126h1v1h-1zM296 126h1v1h-1zM303 126h1v1h-1zM305 126h1v1h-1zM309 126h1v1h-1zM265 127h1v1h-1zM268 127h1v1h-1zM271 127h1v1h-1zM277 127h1v1h-1zM279 127h1v1h-1zM282 127h1v1h-1zM285 127h1v1h-1zM291 127h1v1h-1zM293 127h1v1h-1zM297 127h1v1h-1zM301 127h1v1h-1zM303 127h1v1h-1zM306 127h1v1h-1zM308 127h1v1h-1zM310 127h1v1h-1zM265 128h1v1h-1zM267 128h1v1h-1zM269 128h1v1h-1zM271 128h1v1h-1zM276 128h1v1h-1zM280 128h1v1h-1zM282 128h1v1h-1zM284 128h1v1h-1zM291 128h1v1h-1zM293 128h1v1h-1zM297 128h1v1h-1zM301 128h1v1h-1zM303 128h1v1h-1zM308 128h1v1h-1zM310 128h1v1h-1zM265 129h2v1h-2zM270 129h5v1h-5zM276 129h1v1h-1zM278 129h2v1h-2zM281 129h2v1h-2zM285 129h2v1h-2zM291 129h2v1h-2zM298 129h1v1h-1zM300 129h1v1h-1zM304 129h5v1h-5z" fill="#000"/>
<path d="M377 119h1v1h-1zM382 119h1v1h-1zM384 119h1v1h-1zM389 119h1v1h-1zM393 119h5v1h-5zM402 119h1v1h-1zM414 119h1v1h-1zM418 119h1v1h-1zM420 119h1v1h-1zM377 120h1v1h-1zM380 120h7v1h-7zM390 120h1v1h-1zM393 120h1v1h-1zM397 120h1v1h-1zM402 120h1v1h-1zM405 120h6v1h-6zM414 120h1v1h-1zM416 120h7v1h-7zM377 121h3v1h-3zM382 121h1v1h-1zM384 121h1v1h-1zM393 121h1v1h-1zM397 121h1v1h-1zM400 121h5v1h-5zM410 121h1v1h-1zM412 121h4v1h-4zM418 121h1v1h-1zM420 121h1v1h-1zM376 122h1v1h-1zM382 122h1v1h-1zM384 122h1v1h-1zM393 122h5v1h-5zM402 122h1v1h-1zM410 122h1v1h-1zM414 122h1v1h-1zM376 123h3v1h-3zM380 123h7v1h-7zM388 123h3v1h-3zM402 123h1v1h-1zM404 123h1v1h-1zM410 123h1v1h-1zM414 123h1v1h-1zM417 123h6v1h-6zM377 124h1v1h-1zM390 124h1v1h-1zM393 124h5v1h-5zM402 124h2v1h-2zM406 124h5v1h-5zM414 124h2v1h-2zM417 124h1v1h-1zM419 124h1v1h-1zM422 124h1v1h-1zM376 125h4v1h-4zM381 125h5v1h-5zM390 125h1v1h-1zM395 125h1v1h-1zM401 125h2v1h-2zM410 125h1v1h-1zM413 125h2v1h-2zM417 125h1v1h-1zM419 125h1v1h-1zM422 125h1v1h-1zM377 126h1v1h-1zM381 126h1v1h-1zM385 126h1v1h-1zM390 126h1v1h-1zM392 126h7v1h-7zM400 126h1v1h-1zM402 126h1v1h-1zM410 126h1v1h-1zM412 126h1v1h-1zM414 126h1v1h-1zM417 126h6v1h-6zM377 127h1v1h-1zM381 127h5v1h-5zM390 127h2v1h-2zM394 127h1v1h-1zM396 127h1v1h-1zM402 127h1v1h-1zM410 127h1v1h-1zM414 127h1v1h-1zM417 127h1v1h-1zM419 127h1v1h-1zM422 127h1v1h-1zM377 128h1v1h-1zM379 128h1v1h-1zM381 128h1v1h-1zM385 128h1v1h-1zM390 128h1v1h-1zM393 128h1v1h-1zM397 128h1v1h-1zM402 128h1v1h-1zM405 128h6v1h-6zM414 128h1v1h-1zM417 128h6v1h-6zM377 129h2v1h-2zM381 129h5v1h-5zM392 129h1v1h-1zM398 129h1v1h-1zM400 129h3v1h-3zM412 129h3v1h-3zM417 129h1v1h-1zM422 129h1v1h-1z" fill="#000"/>
<path d="M492 119h1v1h-1zM503 119h1v1h-1zM507 119h1v1h-1zM517 119h1v1h-1zM528 119h1v1h-1zM537 119h9v1h-9zM553 119h1v1h-1zM493 120h1v1h-1zM503 120h1v1h-1zM505 120h1v1h-1zM507 120h1v1h-1zM513 120h9v1h-9zM528 120h1v1h-1zM537 120h1v1h-1zM541 120h1v1h-1zM545 120h1v1h-1zM548 120h11v1h-11zM488 121h11v1h-11zM502 121h1v1h-1zM505 121h1v1h-1zM507 121h1v1h-1zM517 121h1v1h-1zM528 121h6v1h-6zM537 121h1v1h-1zM541 121h1v1h-1zM545 121h1v1h-1zM548 121h1v1h-1zM552 121h1v1h-1zM557 121h1v1h-1zM491 122h1v1h-1zM495 122h1v1h-1zM502 122h1v1h-1zM504 122h6v1h-6zM514 122h1v1h-1zM517 122h1v1h-1zM520 122h1v1h-1zM528 122h1v1h-1zM537 122h9v1h-9zM549 122h1v1h-1zM551 122h1v1h-1zM554 122h1v1h-1zM556 122h1v1h-1zM491 123h1v1h-1zM495 123h1v1h-1zM501 123h3v1h-3zM507 123h1v1h-1zM515 123h1v1h-1zM517 123h1v1h-1zM519 123h1v1h-1zM528 123h1v1h-1zM537 123h1v1h-1zM541 123h1v1h-1zM545 123h1v1h-1zM552 123h2v1h-2zM491 124h1v1h-1zM495 124h1v1h-1zM500 124h1v1h-1zM502 124h1v1h-1zM507 124h1v1h-1zM512 124h11v1h-11zM525 124h8v1h-8zM537 124h1v1h-1zM541 124h1v1h-1zM545 124h1v1h-1zM550 124h1v1h-1zM552 124h1v1h-1zM554 124h1v1h-1zM556 124h1v1h-1zM492 125h1v1h-1zM494 125h1v1h-1zM502 125h1v1h-1zM504 125h7v1h-7zM517 125h1v1h-1zM525 125h1v1h-1zM532 125h1v1h-1zM537 125h9v1h-9zM548 125h2v1h-2zM551 125h5v1h-5zM557 125h1v1h-1zM492 126h1v1h-1zM494 126h1v1h-1zM502 126h1v1h-1zM507 126h1v1h-1zM516 126h1v1h-1zM518 126h1v1h-1zM525 126h1v1h-1zM532 126h1v1h-1zM537 126h1v1h-1zM541 126h1v1h-1zM545 126h1v1h-1zM553 126h1v1h-1zM493 127h1v1h-1zM502 127h1v1h-1zM507 127h1v1h-1zM515 127h1v1h-1zM519 127h1v1h-1zM525 127h1v1h-1zM532 127h1v1h-1zM537 127h1v1h-1zM541 127h1v1h-1zM545 127h1v1h-1zM548 127h11v1h-11zM491 128h2v1h-2zM494 128h2v1h-2zM502 128h1v1h-1zM507 128h1v1h-1zM514 128h1v1h-1zM520 128h1v1h-1zM525 128h8v1h-8zM536 128h1v1h-1zM541 128h1v1h-1zM545 128h1v1h-1zM553 128h1v1h-1zM488 129h3v1h-3zM496 129h3v1h-3zM502 129h1v1h-1zM507 129h1v1h-1zM512 129h2v1h-2zM521 129h2v1h-2zM525 129h1v1h-1zM532 129h1v1h-1zM536 129h1v1h-1zM541 129h1v1h-1zM544 129h2v1h-2zM553 129h1v1h-1z" fill="#000"/>
<path d="M624 119h1v1h-1zM629 119h1v1h-1zM634 119h4v1h-4zM641 119h1v1h-1zM624 120h9v1h-9zM634 120h1v1h-1zM637 120h1v1h-1zM640 120h1v1h-1zM642 120h1v1h-1zM622 121h4v1h-4zM627 121h1v1h-1zM630 121h1v1h-1zM632 121h1v1h-1zM634 121h1v1h-1zM636 121h1v1h-1zM639 121h1v1h-1zM643 121h1v1h-1zM624 122h1v1h-1zM626 122h1v1h-1zM628 122h3v1h-3zM632 122h1v1h-1zM634 122h2v1h-2zM638 122h1v1h-1zM640 122h3v1h-3zM644 122h1v1h-1zM624 123h2v1h-2zM627 123h1v1h-1zM631 123h1v1h-1zM634 123h1v1h-1zM636 123h1v1h-1zM641 123h1v1h-1zM624 124h1v1h-1zM626 124h1v1h-1zM628 124h3v1h-3zM632 124h1v1h-1zM634 124h1v1h-1zM637 124h8v1h-8zM622 125h4v1h-4zM634 125h1v1h-1zM637 125h1v1h-1zM641 125h1v1h-1zM624 126h1v1h-1zM626 126h7v1h-7zM634 126h3v1h-3zM639 126h1v1h-1zM641 126h1v1h-1zM643 126h1v1h-1zM624 127h1v1h-1zM627 127h1v1h-1zM629 127h1v1h-1zM631 127h1v1h-1zM634 127h1v1h-1zM638 127h1v1h-1zM641 127h1v1h-1zM644 127h1v1h-1zM624 128h1v1h-1zM626 128h1v1h-1zM629 128h1v1h-1zM632 128h1v1h-1zM634 128h1v1h-1zM637 128h1v1h-1zM641 128h1v1h-1zM644 128h1v1h-1zM622 129h4v1h-4zM628 129h2v1h-2zM632 129h1v1h-1zM634 129h1v1h-1zM640 129h2v1h-2z" fill="#000"/>
<path d="M504 149h9v1h-9zM517 149h1v1h-1zM522 149h1v1h-1zM506 150h1v1h-1zM510 150h1v1h-1zM517 150h1v1h-1zM522 150h1v1h-1zM506 151h1v1h-1zM510 151h1v1h-1zM515 151h5v1h-5zM521 151h1v1h-1zM524 151h1v1h-1zM506 152h1v1h-1zM510 152h1v1h-1zM517 152h1v1h-1zM519 152h1v1h-1zM521 152h1v1h-1zM525 152h1v1h-1zM506 153h1v1h-1zM510 153h1v1h-1zM517 153h1v1h-1zM519 153h7v1h-7zM503 154h11v1h-11zM516 154h1v1h-1zM519 154h1v1h-1zM506 155h1v1h-1zM510 155h1v1h-1zM516 155h1v1h-1zM518 155h1v1h-1zM521 155h5v1h-5zM505 156h1v1h-1zM510 156h1v1h-1zM517 156h2v1h-2zM521 156h1v1h-1zM525 156h1v1h-1zM505 157h1v1h-1zM510 157h1v1h-1zM517 157h1v1h-1zM519 157h1v1h-1zM521 157h1v1h-1zM525 157h1v1h-1zM504 158h1v1h-1zM510 158h1v1h-1zM516 158h1v1h-1zM519 158h1v1h-1zM521 158h5v1h-5zM503 159h1v1h-1zM510 159h1v1h-1zM515 159h1v1h-1zM521 159h1v1h-1zM525 159h1v1h-1z" fill="#000"/>
<path d="M492 182h1v1h-1zM498 182h1v1h-1zM503 182h6v1h-6zM493 183h1v1h-1zM496 183h5v1h-5zM504 183h1v1h-1zM507 183h1v1h-1zM509 183h5v1h-5zM498 184h1v1h-1zM504 184h1v1h-1zM507 184h1v1h-1zM509 184h1v1h-1zM513 184h1v1h-1zM491 185h3v1h-3zM495 185h7v1h-7zM504 185h4v1h-4zM509 185h1v1h-1zM513 185h1v1h-1zM493 186h1v1h-1zM497 186h1v1h-1zM499 186h1v1h-1zM501 186h1v1h-1zM504 186h1v1h-1zM507 186h1v1h-1zM510 186h1v1h-1zM512 186h1v1h-1zM493 187h1v1h-1zM496 187h1v1h-1zM498 187h2v1h-2zM504 187h4v1h-4zM510 187h1v1h-1zM512 187h1v1h-1zM493 188h1v1h-1zM497 188h1v1h-1zM499 188h1v1h-1zM504 188h1v1h-1zM507 188h1v1h-1zM511 188h1v1h-1zM493 189h1v1h-1zM495 189h7v1h-7zM504 189h1v1h-1zM507 189h2v1h-2zM511 189h1v1h-1zM493 190h2v1h-2zM498 190h2v1h-2zM503 190h5v1h-5zM510 190h1v1h-1zM512 190h1v1h-1zM493 191h1v1h-1zM497 191h1v1h-1zM500 191h1v1h-1zM507 191h1v1h-1zM509 191h1v1h-1zM512 191h1v1h-1zM495 192h2v1h-2zM501 192h1v1h-1zM507 192h2v1h-2zM513 192h1v1h-1z" fill="#000"/>
<path d="M492 197h10v1h-10zM506 197h2v1h-2zM492 198h1v1h-1zM501 198h1v1h-1zM508 198h1v1h-1zM491 199h1v1h-1zM494 199h1v1h-1zM500 199h1v1h-1zM508 199h1v1h-1zM494 200h6v1h-6zM508 200h1v1h-1zM494 201h1v1h-1zM507 201h1v1h-1zM509 201h1v1h-1zM494 202h7v1h-7zM507 202h1v1h-1zM509 202h1v1h-1zM500 203h1v1h-1zM506 203h1v1h-1zM510 203h1v1h-1zM492 204h7v1h-7zM500 204h1v1h-1zM506 204h1v1h-1zM510 204h1v1h-1zM500 205h1v1h-1zM505 205h1v1h-1zM511 205h1v1h-1zM497 206h1v1h-1zM499 206h1v1h-1zM504 206h1v1h-1zM512 206h1v1h-1zM498 207h1v1h-1zM503 207h1v1h-1zM513 207h1v1h-1z" fill="#000"/>
<path d="M493 219h1v1h-1zM497 219h1v1h-1zM505 219h1v1h-1zM510 219h1v1h-1zM517 219h1v1h-1zM520 219h5v1h-5zM530 219h1v1h-1zM532 219h5v1h-5zM493 220h1v1h-1zM497 220h1v1h-1zM505 220h1v1h-1zM507 220h7v1h-7zM516 220h1v1h-1zM527 220h3v1h-3zM532 220h1v1h-1zM536 220h1v1h-1zM493 221h2v1h-2zM496 221h5v1h-5zM503 221h4v1h-4zM510 221h1v1h-1zM515 221h1v1h-1zM529 221h1v1h-1zM532 221h1v1h-1zM536 221h1v1h-1zM491 222h1v1h-1zM493 222h1v1h-1zM495 222h1v1h-1zM497 222h1v1h-1zM500 222h1v1h-1zM505 222h1v1h-1zM507 222h6v1h-6zM518 222h1v1h-1zM527 222h4v1h-4zM532 222h5v1h-5zM491 223h1v1h-1zM493 223h1v1h-1zM497 223h1v1h-1zM500 223h1v1h-1zM505 223h1v1h-1zM510 223h1v1h-1zM512 223h1v1h-1zM517 223h1v1h-1zM519 223h7v1h-7zM529 223h1v1h-1zM491 224h1v1h-1zM493 224h9v1h-9zM505 224h9v1h-9zM516 224h2v1h-2zM523 224h1v1h-1zM529 224h2v1h-2zM532 224h5v1h-5zM493 225h1v1h-1zM497 225h1v1h-1zM504 225h2v1h-2zM510 225h1v1h-1zM512 225h1v1h-1zM515 225h1v1h-1zM517 225h1v1h-1zM523 225h1v1h-1zM528 225h2v1h-2zM531 225h1v1h-1zM534 225h1v1h-1zM493 226h1v1h-1zM497 226h2v1h-2zM503 226h1v1h-1zM505 226h1v1h-1zM507 226h7v1h-7zM517 226h1v1h-1zM523 226h1v1h-1zM528 226h2v1h-2zM532 226h5v1h-5zM493 227h1v1h-1zM496 227h1v1h-1zM499 227h1v1h-1zM505 227h1v1h-1zM507 227h1v1h-1zM510 227h1v1h-1zM517 227h1v1h-1zM523 227h1v1h-1zM527 227h1v1h-1zM529 227h1v1h-1zM534 227h1v1h-1zM493 228h1v1h-1zM495 228h1v1h-1zM500 228h1v1h-1zM505 228h1v1h-1zM507 228h2v1h-2zM510 228h1v1h-1zM517 228h1v1h-1zM523 228h1v1h-1zM529 228h1v1h-1zM534 228h1v1h-1zM493 229h2v1h-2zM501 229h1v1h-1zM503 229h4v1h-4zM509 229h5v1h-5zM517 229h1v1h-1zM521 229h3v1h-3zM529 229h1v1h-1zM531 229h7v1h-7z" fill="#000"/>
<path d="M494 264h1v1h-1zM498 264h1v1h-1zM504 264h1v1h-1zM510 264h1v1h-1zM516 264h1v1h-1zM522 264h1v1h-1zM532 264h1v1h-1zM494 265h1v1h-1zM498 265h1v1h-1zM504 265h1v1h-1zM509 265h1v1h-1zM511 265h1v1h-1zM517 265h9v1h-9zM527 265h11v1h-11zM493 266h1v1h-1zM496 266h6v1h-6zM503 266h4v1h-4zM508 266h1v1h-1zM512 266h1v1h-1zM517 266h1v1h-1zM522 266h1v1h-1zM527 266h1v1h-1zM531 266h1v1h-1zM536 266h1v1h-1zM493 267h1v1h-1zM498 267h1v1h-1zM504 267h1v1h-1zM507 267h1v1h-1zM509 267h3v1h-3zM513 267h1v1h-1zM519 267h7v1h-7zM528 267h1v1h-1zM530 267h1v1h-1zM533 267h1v1h-1zM535 267h1v1h-1zM492 268h2v1h-2zM495 268h7v1h-7zM503 268h1v1h-1zM505 268h1v1h-1zM515 268h3v1h-3zM519 268h1v1h-1zM522 268h1v1h-1zM525 268h1v1h-1zM531 268h2v1h-2zM491 269h1v1h-1zM493 269h1v1h-1zM497 269h1v1h-1zM503 269h7v1h-7zM513 269h1v1h-1zM517 269h1v1h-1zM519 269h7v1h-7zM529 269h1v1h-1zM531 269h1v1h-1zM533 269h1v1h-1zM535 269h1v1h-1zM493 270h1v1h-1zM496 270h6v1h-6zM505 270h1v1h-1zM507 270h1v1h-1zM509 270h1v1h-1zM511 270h1v1h-1zM513 270h1v1h-1zM517 270h1v1h-1zM521 270h3v1h-3zM527 270h2v1h-2zM530 270h5v1h-5zM536 270h1v1h-1zM493 271h1v1h-1zM500 271h1v1h-1zM505 271h5v1h-5zM511 271h1v1h-1zM513 271h1v1h-1zM517 271h1v1h-1zM520 271h1v1h-1zM522 271h1v1h-1zM524 271h1v1h-1zM532 271h1v1h-1zM493 272h1v1h-1zM497 272h1v1h-1zM499 272h1v1h-1zM503 272h3v1h-3zM507 272h1v1h-1zM509 272h1v1h-1zM511 272h1v1h-1zM513 272h1v1h-1zM517 272h1v1h-1zM519 272h1v1h-1zM522 272h1v1h-1zM525 272h1v1h-1zM527 272h11v1h-11zM493 273h1v1h-1zM498 273h1v1h-1zM505 273h1v1h-1zM507 273h3v1h-3zM511 273h1v1h-1zM513 273h1v1h-1zM516 273h1v1h-1zM518 273h1v1h-1zM522 273h1v1h-1zM532 273h1v1h-1zM493 274h1v1h-1zM499 274h1v1h-1zM505 274h1v1h-1zM507 274h1v1h-1zM509 274h1v1h-1zM512 274h2v1h-2zM515 274h1v1h-1zM519 274h7v1h-7zM532 274h1v1h-1z" fill="#000"/>
<path d="M477 281h7v1h-7zM490 281h1v1h-1zM495 281h2v1h-2zM477 282h1v1h-1zM483 282h1v1h-1zM490 282h5v1h-5zM477 283h7v1h-7zM489 283h1v1h-1zM491 283h1v1h-1zM494 283h1v1h-1zM477 284h1v1h-1zM483 284h1v1h-1zM489 284h1v1h-1zM491 284h1v1h-1zM494 284h1v1h-1zM475 285h11v1h-11zM488 285h2v1h-2zM491 285h1v1h-1zM494 285h1v1h-1zM476 286h1v1h-1zM479 286h1v1h-1zM487 286h1v1h-1zM489 286h1v1h-1zM491 286h7v1h-7zM476 287h9v1h-9zM489 287h1v1h-1zM491 287h1v1h-1zM494 287h1v1h-1zM476 288h1v1h-1zM479 288h1v1h-1zM481 288h1v1h-1zM484 288h1v1h-1zM489 288h1v1h-1zM491 288h1v1h-1zM494 288h1v1h-1zM497 288h1v1h-1zM476 289h4v1h-4zM482 289h2v1h-2zM489 289h1v1h-1zM491 289h1v1h-1zM493 289h1v1h-1zM495 289h1v1h-1zM497 289h1v1h-1zM475 290h2v1h-2zM479 290h1v1h-1zM482 290h2v1h-2zM489 290h1v1h-1zM491 290h2v1h-2zM494 290h1v1h-1zM496 290h2v1h-2zM479 291h3v1h-3zM484 291h2v1h-2zM489 291h1v1h-1zM491 291h1v1h-1zM495 291h1v1h-1zM497 291h1v1h-1z" fill="#000"/>
<path d="M477 311h7v1h-7zM492 311h1v1h-1zM477 312h1v1h-1zM483 312h1v1h-1zM487 312h11v1h-11zM477 313h7v1h-7zM477 314h1v1h-1zM483 314h1v1h-1zM490 314h5v1h-5zM475 315h11v1h-11zM490 315h1v1h-1zM494 315h1v1h-1zM476 316h1v1h-1zM479 316h1v1h-1zM488 316h9v1h-9zM476 317h9v1h-9zM488 317h1v1h-1zM496 317h1v1h-1zM476 318h1v1h-1zM479 318h1v1h-1zM481 318h1v1h-1zM484 318h1v1h-1zM488 318h1v1h-1zM490 318h5v1h-5zM496 318h1v1h-1zM476 319h4v1h-4zM482 319h2v1h-2zM488 319h1v1h-1zM490 319h1v1h-1zM494 319h1v1h-1zM496 319h1v1h-1zM475 320h2v1h-2zM479 320h1v1h-1zM482 320h2v1h-2zM488 320h1v1h-1zM490 320h5v1h-5zM496 320h1v1h-1zM479 321h3v1h-3zM484 321h2v1h-2zM488 321h1v1h-1zM495 321h2v1h-2z" fill="#000"/>
<path d="M476 341h9v1h-9zM489 341h1v1h-1zM493 341h1v1h-1zM480 342h1v1h-1zM489 342h1v1h-1zM493 342h1v1h-1zM477 343h1v1h-1zM480 343h1v1h-1zM483 343h1v1h-1zM489 343h1v1h-1zM492 343h6v1h-6zM478 344h1v1h-1zM480 344h1v1h-1zM482 344h1v1h-1zM487 344h4v1h-4zM497 344h1v1h-1zM480 345h1v1h-1zM489 345h1v1h-1zM492 345h1v1h-1zM497 345h1v1h-1zM475 346h11v1h-11zM489 346h1v1h-1zM493 346h1v1h-1zM497 346h1v1h-1zM480 347h1v1h-1zM489 347h1v1h-1zM491 347h1v1h-1zM495 347h1v1h-1zM497 347h1v1h-1zM480 348h1v1h-1zM489 348h2v1h-2zM494 348h1v1h-1zM497 348h1v1h-1zM480 349h1v1h-1zM487 349h2v1h-2zM492 349h2v1h-2zM497 349h1v1h-1zM480 350h1v1h-1zM497 350h1v1h-1zM480 351h1v1h-1zM495 351h2v1h-2z" fill="#000"/>
<path d="M495 380h1v1h-1zM503 380h6v1h-6zM523 380h1v1h-1zM529 380h1v1h-1zM532 380h6v1h-6zM491 381h11v1h-11zM504 381h1v1h-1zM507 381h1v1h-1zM509 381h5v1h-5zM515 381h4v1h-4zM523 381h1v1h-1zM530 381h1v1h-1zM537 381h1v1h-1zM494 382h1v1h-1zM504 382h1v1h-1zM507 382h1v1h-1zM509 382h1v1h-1zM513 382h1v1h-1zM515 382h1v1h-1zM518 382h8v1h-8zM528 382h1v1h-1zM537 382h1v1h-1zM493 383h1v1h-1zM495 383h6v1h-6zM504 383h4v1h-4zM509 383h1v1h-1zM513 383h1v1h-1zM515 383h1v1h-1zM518 383h1v1h-1zM523 383h1v1h-1zM528 383h1v1h-1zM531 383h4v1h-4zM537 383h1v1h-1zM493 384h1v1h-1zM499 384h1v1h-1zM504 384h1v1h-1zM507 384h1v1h-1zM510 384h1v1h-1zM512 384h1v1h-1zM515 384h1v1h-1zM518 384h1v1h-1zM520 384h1v1h-1zM523 384h1v1h-1zM528 384h1v1h-1zM531 384h1v1h-1zM534 384h1v1h-1zM537 384h1v1h-1zM492 385h2v1h-2zM498 385h1v1h-1zM504 385h4v1h-4zM510 385h1v1h-1zM512 385h1v1h-1zM515 385h4v1h-4zM521 385h1v1h-1zM523 385h1v1h-1zM528 385h1v1h-1zM531 385h4v1h-4zM537 385h1v1h-1zM491 386h1v1h-1zM493 386h9v1h-9zM504 386h1v1h-1zM507 386h1v1h-1zM511 386h1v1h-1zM515 386h1v1h-1zM518 386h1v1h-1zM521 386h1v1h-1zM523 386h1v1h-1zM528 386h1v1h-1zM531 386h1v1h-1zM534 386h1v1h-1zM537 386h1v1h-1zM493 387h1v1h-1zM498 387h1v1h-1zM504 387h1v1h-1zM507 387h2v1h-2zM511 387h1v1h-1zM515 387h1v1h-1zM518 387h1v1h-1zM523 387h1v1h-1zM528 387h1v1h-1zM531 387h1v1h-1zM534 387h1v1h-1zM537 387h1v1h-1zM493 388h1v1h-1zM498 388h1v1h-1zM503 388h5v1h-5zM510 388h1v1h-1zM512 388h1v1h-1zM515 388h1v1h-1zM518 388h1v1h-1zM523 388h1v1h-1zM528 388h1v1h-1zM531 388h4v1h-4zM537 388h1v1h-1zM493 389h1v1h-1zM498 389h1v1h-1zM507 389h1v1h-1zM509 389h1v1h-1zM512 389h1v1h-1zM515 389h4v1h-4zM523 389h1v1h-1zM528 389h1v1h-1zM537 389h1v1h-1zM493 390h1v1h-1zM496 390h3v1h-3zM507 390h2v1h-2zM513 390h1v1h-1zM521 390h3v1h-3zM528 390h1v1h-1zM535 390h3v1h-3z" fill="#000"/>
<path d="M496 411h1v1h-1zM505 411h1v1h-1zM508 411h1v1h-1zM511 411h1v1h-1zM518 411h1v1h-1zM522 411h1v1h-1zM528 411h1v1h-1zM534 411h1v1h-1zM540 411h1v1h-1zM546 411h1v1h-1zM556 411h1v1h-1zM492 412h10v1h-10zM505 412h1v1h-1zM508 412h1v1h-1zM512 412h1v1h-1zM518 412h1v1h-1zM522 412h1v1h-1zM528 412h1v1h-1zM533 412h1v1h-1zM535 412h1v1h-1zM541 412h9v1h-9zM551 412h11v1h-11zM492 413h1v1h-1zM495 413h1v1h-1zM498 413h1v1h-1zM501 413h1v1h-1zM504 413h1v1h-1zM508 413h1v1h-1zM517 413h1v1h-1zM520 413h6v1h-6zM527 413h4v1h-4zM532 413h1v1h-1zM536 413h1v1h-1zM541 413h1v1h-1zM546 413h1v1h-1zM551 413h1v1h-1zM555 413h1v1h-1zM560 413h1v1h-1zM491 414h1v1h-1zM494 414h1v1h-1zM499 414h1v1h-1zM504 414h10v1h-10zM517 414h1v1h-1zM522 414h1v1h-1zM528 414h1v1h-1zM531 414h1v1h-1zM533 414h3v1h-3zM537 414h1v1h-1zM543 414h7v1h-7zM552 414h1v1h-1zM554 414h1v1h-1zM557 414h1v1h-1zM559 414h1v1h-1zM493 415h1v1h-1zM496 415h1v1h-1zM498 415h1v1h-1zM500 415h1v1h-1zM507 415h1v1h-1zM516 415h2v1h-2zM519 415h7v1h-7zM527 415h1v1h-1zM529 415h1v1h-1zM539 415h3v1h-3zM543 415h1v1h-1zM546 415h1v1h-1zM549 415h1v1h-1zM555 415h2v1h-2zM496 416h1v1h-1zM499 416h1v1h-1zM507 416h5v1h-5zM515 416h1v1h-1zM517 416h1v1h-1zM521 416h1v1h-1zM527 416h7v1h-7zM537 416h1v1h-1zM541 416h1v1h-1zM543 416h7v1h-7zM553 416h1v1h-1zM555 416h1v1h-1zM557 416h1v1h-1zM559 416h1v1h-1zM492 417h10v1h-10zM507 417h1v1h-1zM511 417h1v1h-1zM517 417h1v1h-1zM520 417h6v1h-6zM529 417h1v1h-1zM531 417h1v1h-1zM533 417h1v1h-1zM535 417h1v1h-1zM537 417h1v1h-1zM541 417h1v1h-1zM545 417h3v1h-3zM551 417h2v1h-2zM554 417h5v1h-5zM560 417h1v1h-1zM496 418h1v1h-1zM506 418h1v1h-1zM508 418h1v1h-1zM510 418h1v1h-1zM517 418h1v1h-1zM524 418h1v1h-1zM529 418h5v1h-5zM535 418h1v1h-1zM537 418h1v1h-1zM541 418h1v1h-1zM544 418h1v1h-1zM546 418h1v1h-1zM548 418h1v1h-1zM556 418h1v1h-1zM495 419h1v1h-1zM497 419h1v1h-1zM505 419h1v1h-1zM509 419h1v1h-1zM517 419h1v1h-1zM521 419h1v1h-1zM523 419h1v1h-1zM527 419h3v1h-3zM531 419h1v1h-1zM533 419h1v1h-1zM535 419h1v1h-1zM537 419h1v1h-1zM541 419h1v1h-1zM543 419h1v1h-1zM546 419h1v1h-1zM549 419h1v1h-1zM551 419h11v1h-11zM493 420h2v1h-2zM498 420h2v1h-2zM504 420h1v1h-1zM508 420h1v1h-1zM510 420h2v1h-2zM517 420h1v1h-1zM522 420h1v1h-1zM529 420h1v1h-1zM531 420h3v1h-3zM535 420h1v1h-1zM537 420h1v1h-1zM540 420h1v1h-1zM542 420h1v1h-1zM546 420h1v1h-1zM556 420h1v1h-1zM491 421h2v1h-2zM500 421h2v1h-2zM503 421h1v1h-1zM506 421h2v1h-2zM512 421h2v1h-2zM517 421h1v1h-1zM523 421h1v1h-1zM529 421h1v1h-1zM531 421h1v1h-1zM533 421h1v1h-1zM536 421h2v1h-2zM539 421h1v1h-1zM543 421h7v1h-7zM556 421h1v1h-1z" fill="#000"/>
<path d="M503 442h1v1h-1zM512 442h9v1h-9zM528 442h1v1h-1zM503 443h1v1h-1zM512 443h1v1h-1zM516 443h1v1h-1zM520 443h1v1h-1zM523 443h11v1h-11zM503 444h6v1h-6zM512 444h1v1h-1zM516 444h1v1h-1zM520 444h1v1h-1zM523 444h1v1h-1zM527 444h1v1h-1zM532 444h1v1h-1zM503 445h1v1h-1zM512 445h9v1h-9zM524 445h1v1h-1zM526 445h1v1h-1zM529 445h1v1h-1zM531 445h1v1h-1zM503 446h1v1h-1zM512 446h1v1h-1zM516 446h1v1h-1zM520 446h1v1h-1zM527 446h2v1h-2zM500 447h8v1h-8zM512 447h1v1h-1zM516 447h1v1h-1zM520 447h1v1h-1zM525 447h1v1h-1zM527 447h1v1h-1zM529 447h1v1h-1zM531 447h1v1h-1zM500 448h1v1h-1zM507 448h1v1h-1zM512 448h9v1h-9zM523 448h2v1h-2zM526 448h5v1h-5zM532 448h1v1h-1zM500 449h1v1h-1zM507 449h1v1h-1zM512 449h1v1h-1zM516 449h1v1h-1zM520 449h1v1h-1zM528 449h1v1h-1zM500 450h1v1h-1zM507 450h1v1h-1zM512 450h1v1h-1zM516 450h1v1h-1zM520 450h1v1h-1zM523 450h11v1h-11zM500 451h8v1h-8zM511 451h1v1h-1zM516 451h1v1h-1zM520 451h1v1h-1zM528 451h1v1h-1zM500 452h1v1h-1zM507 452h1v1h-1zM511 452h1v1h-1zM516 452h1v1h-1zM519 452h2v1h-2zM528 452h1v1h-1z" fill="#000"/>
<path d="M285 64h4v1h-4zM284 65h2v1h-2zM288 65h2v1h-2zM288 66h2v1h-2zM288 67h2v1h-2zM287 68h2v1h-2zM286 69h2v1h-2zM285 70h2v1h-2zM284 71h6v1h-6z" fill="#000"/>
<path d="M292 64h4v1h-4zM291 65h2v1h-2zM295 65h2v1h-2zM291 66h2v1h-2zM295 66h2v1h-2zM291 67h2v1h-2zM295 67h2v1h-2zM292 68h5v1h-5zM295 69h2v1h-2zM291 70h2v1h-2zM295 70h2v1h-2zM292 71h4v1h-4z" fill="#000"/>
<path d="M299 62h3v1h-3zM304 62h4v1h-4zM298 63h2v1h-2zM301 63h4v1h-4zM307 63h2v1h-2zM299 64h3v1h-3zM303 64h2v1h-2zM302 65h2v1h-2zM302 66h2v1h-2zM302 67h2v1h-2zM302 68h2v1h-2zM303 69h2v1h-2zM303 70h2v1h-2zM307 70h2v1h-2zM304 71h4v1h-4z" fill="#000"/>
</svg>
<div class="a" style="left:475px;top:441px;font-family:'Liberation Mono',monospace;font-size:10.5px;transform:scaleY(1.15);transform-origin:0 0;color:#000;-webkit-text-stroke:0.2px #000">CPU</div>
<!-- taskbar -->
<div id="taskbar" class="a"></div>
<div class="a" style="left:0;top:720px;width:212px;height:8px;background:linear-gradient(90deg,#8e98a2 0,#b4bac0 20px,#a8b0b8 26px,#2a3848 26px,#3a4a5a 30px,#c4c8cc 30px,#a4acb4 80px,#2a3a4a 80px,#6a7a8a 84px,#2a3a4a 86px,#6a7a8a 89px,#22303e 92px,#b0b6bc 92px,#8c96a0 150px,#1e2a38 150px,#2e3e4e 154px,#c8ccd0 154px,#d8dce0 200px,#c0c6cc 212px)"></div>
<div class="a" style="left:-5px;top:722px;width:16px;height:16px;border-radius:50%;background:#3a8cf0"></div>
<svg class="a" style="left:40px;top:720px" width="34" height="8"><path d="M0 8L15 0.5L30 8z" fill="#2a2a32"/></svg>
<div class="a" style="left:108px;top:723px;width:22px;height:12px;border-radius:50%;background:#70d850"></div>
<svg class="a" style="left:176px;top:720px" width="18" height="8"><path d="M2 5L8 0.5L14 5z" fill="#303438"/><ellipse cx="8" cy="9" rx="6" ry="5" fill="#f0b070"/></svg>

<svg class="a" style="left:0;top:670px" width="230" height="58" viewBox="0 670 230 58">
<defs>
<linearGradient id="wmg" x1="0" y1="0" x2="0" y2="1"><stop offset="0" stop-color="#ffffff"/><stop offset=".55" stop-color="#f4f4f4"/><stop offset=".6" stop-color="#dedede"/><stop offset="1" stop-color="#f0f0f0"/></linearGradient>
<filter id="wms" x="-10%" y="-30%" width="130%" height="180%"><feGaussianBlur in="SourceAlpha" stdDeviation="1.5"/><feOffset dx="2" dy="2"/><feComponentTransfer><feFuncA type="linear" slope=".55"/></feComponentTransfer><feMerge><feMergeNode/><feMergeNode in="SourceGraphic"/></feMerge></filter>
</defs>
<g filter="url(#wms)" font-family="Liberation Sans" font-weight="bold" font-style="italic" font-size="34" fill="url(#wmg)" stroke="#000" stroke-width="2.2" paint-order="stroke" stroke-linejoin="round">
<text x="0" y="0" transform="translate(11 715) scale(1.2 1) skewX(-11)">51nb</text>
<text x="0" y="0" transform="translate(112 715) scale(1.24 1) skewX(-11)">com</text>
</g>
<circle cx="109" cy="713.5" r="4" fill="#f01010"/>
</svg>

</body></html>
